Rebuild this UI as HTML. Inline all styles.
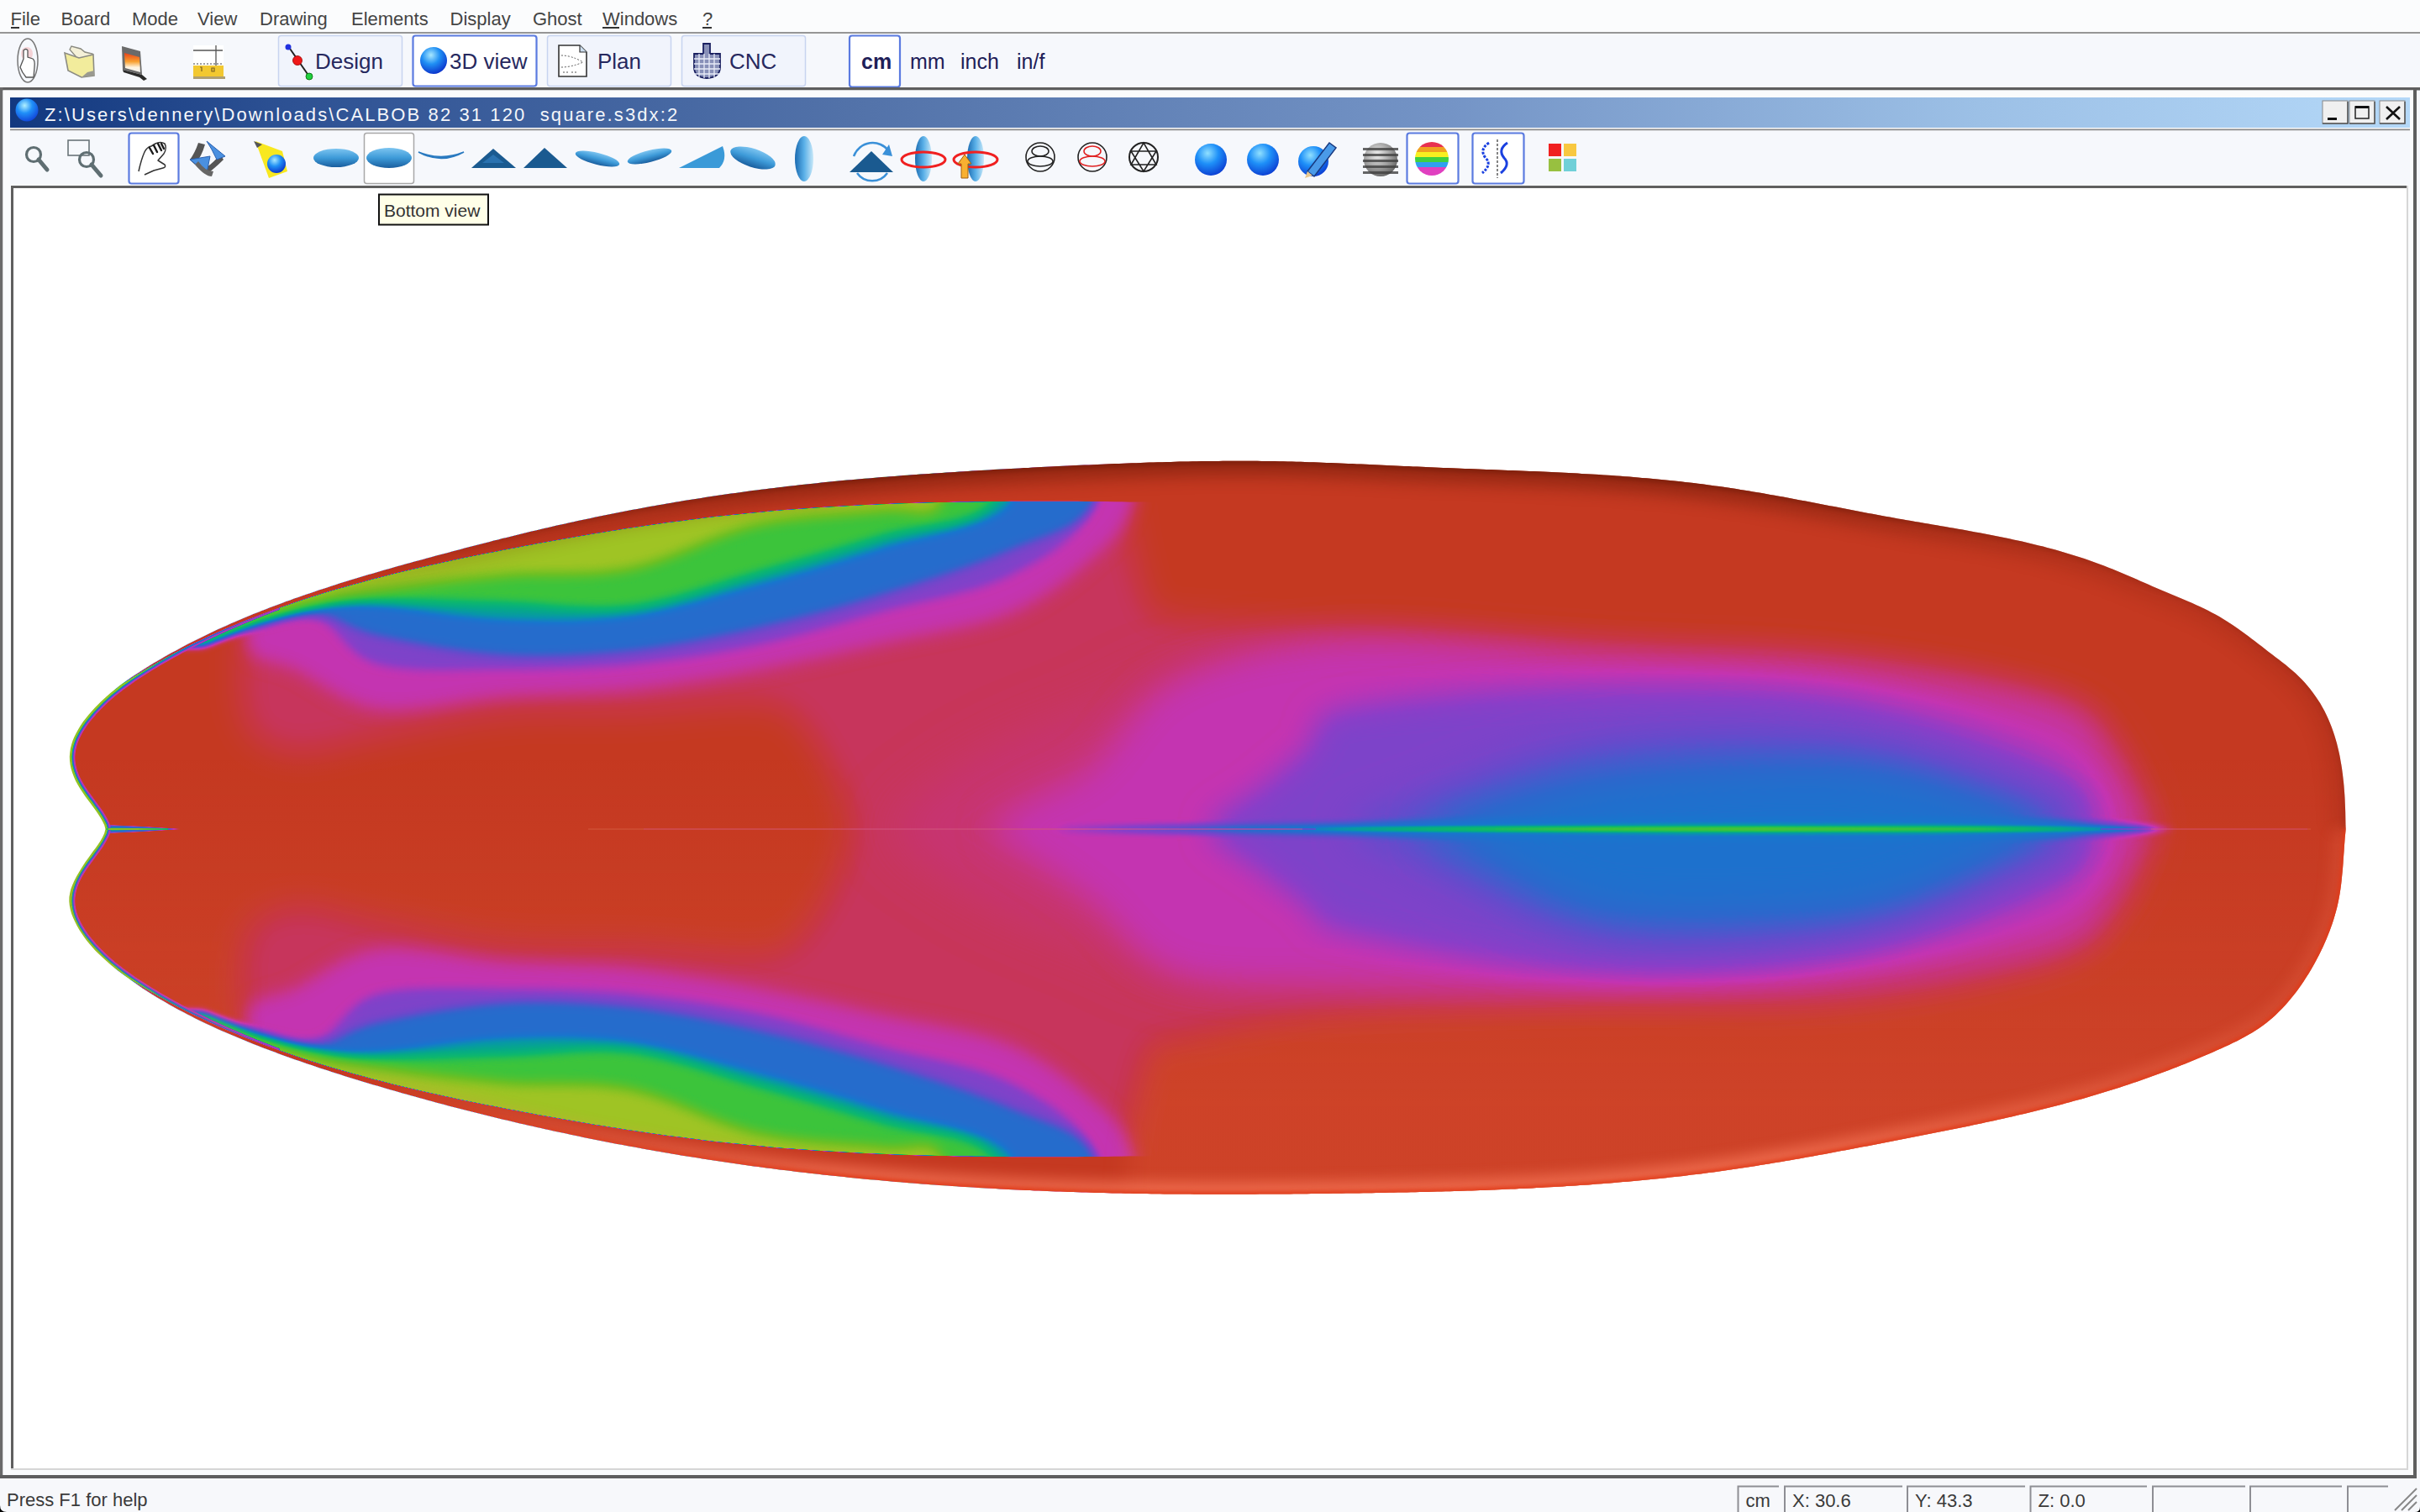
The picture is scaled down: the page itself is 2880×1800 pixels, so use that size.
<!DOCTYPE html><html><head><meta charset="utf-8"><title>Shape3d</title><style>
html,body{margin:0;padding:0;}body{width:2880px;height:1800px;overflow:hidden;position:relative;background:#F7F8FB;font-family:"Liberation Sans", sans-serif;}
.abs{position:absolute;}</style></head><body>
<svg class="abs" style="left:0;top:0" width="2880" height="1800" viewBox="0 0 2880 1800" font-family='"Liberation Sans", sans-serif'>
<rect x="0" y="0" width="2880" height="38" fill="#FBFCFD"/>
<rect x="0" y="38" width="2880" height="2" fill="#969696"/>
<rect x="0" y="40" width="2880" height="65" fill="#F6F8FC"/>
<text x="12.5" y="30" font-size="22" fill="#444" >File</text>
<text x="72.5" y="30" font-size="22" fill="#444" >Board</text>
<text x="157" y="30" font-size="22" fill="#444" >Mode</text>
<text x="235" y="30" font-size="22" fill="#444" >View</text>
<text x="309" y="30" font-size="22" fill="#444" >Drawing</text>
<text x="418" y="30" font-size="22" fill="#444" >Elements</text>
<text x="535.5" y="30" font-size="22" fill="#444" >Display</text>
<text x="634" y="30" font-size="22" fill="#444" >Ghost</text>
<text x="717" y="30" font-size="22" fill="#444" >Windows</text>
<text x="836" y="30" font-size="22" fill="#444" >?</text>
<rect x="13" y="32" width="10" height="2" fill="#333"/>
<rect x="717" y="32" width="20" height="2" fill="#333"/>
<rect x="836" y="32" width="11" height="2" fill="#333"/>
<ellipse cx="33" cy="72" rx="12" ry="26" fill="none" stroke="#777" stroke-width="1.5"/>
<ellipse cx="32" cy="64" rx="7" ry="8" fill="#F4C8CC" opacity="0.8"/>
<path d="M28,70 L28,60 Q31,57 33,60 L33,68 L39,70 Q42,72 41,80 L40,92 L31,92 Q26,86 24,80 Z" fill="#fff" stroke="#555" stroke-width="1.3"/>
<path d="M83,59 L85,55 L96,58 L101,62 L110,64 L111,78 L96,74 Z" fill="#F4F0D8" stroke="#8A8A80" stroke-width="1.4"/>
<path d="M77,63 L94,69 L111,65 L112,90 L97,92 L81,84 Z" fill="#F2EC9C" stroke="#8C8C84" stroke-width="1.6"/>
<path d="M97,92 L112,90 L112,84 L104,86 Z" fill="#9A9A90"/>
<path d="M145,55 L167,61 L169,89 L146,83 Z" fill="#6A6A6A"/>
<linearGradient id="fire" x1="0" y1="0" x2="0" y2="1"><stop offset="0" stop-color="#E84018"/><stop offset="0.45" stop-color="#F8A030"/><stop offset="0.75" stop-color="#FFF4E0"/><stop offset="1" stop-color="#F0F0F0"/></linearGradient>
<path d="M148,63 L166,68 L167,86 L149,81 Z" fill="url(#fire)"/>
<path d="M146,83 L169,89 L175,94 L171,96 L166,92 L147,86 Z" fill="#2A2A2A"/>
<rect x="230" y="54" width="36" height="24" fill="#fff"/>
<path d="M230,60 L265,60 M257,54 L257,78" stroke="#555" stroke-width="1.3"/>
<path d="M230,76 L266,76" stroke="#444" stroke-width="1.2" stroke-dasharray="2,2"/>
<rect x="230" y="78" width="36" height="14" fill="#F2C830"/>
<rect x="230" y="91" width="38" height="3" fill="#B0A070"/>
<path d="M238,80 L240,80 L240,85 M252,81 L255,81 L255,85 L252,85 Z" stroke="#7A6020" stroke-width="1.2" fill="none"/>
<rect x="331.5" y="42.5" width="147" height="60" rx="3" fill="#F1F4FC" stroke="#C8D4F0" stroke-width="1.5"/>
<rect x="491.5" y="42.5" width="147" height="60" rx="3" fill="#fff" stroke="#5B7BE0" stroke-width="2.2"/>
<rect x="651.5" y="42.5" width="147" height="60" rx="3" fill="#F1F4FC" stroke="#C8D4F0" stroke-width="1.5"/>
<rect x="811.5" y="42.5" width="147" height="60" rx="3" fill="#F1F4FC" stroke="#C8D4F0" stroke-width="1.5"/>
<path d="M343,55 L368,91" stroke="#222" stroke-width="2"/>
<circle cx="343" cy="56" r="3.5" fill="#2030E0"/>
<circle cx="354" cy="72" r="5.5" fill="#F01818" stroke="#900" stroke-width="0.8"/>
<circle cx="368" cy="91" r="4" fill="#20D040" stroke="#060" stroke-width="0.8"/>
<text x="375" y="82" font-size="26" fill="#26285E" >Design</text>
<radialGradient id="sph3d" cx="0.4" cy="0.3" r="0.75"><stop offset="0" stop-color="#A8E8FF"/><stop offset="0.45" stop-color="#2090F4"/><stop offset="1" stop-color="#0A2CC8"/></radialGradient><circle cx="516" cy="72" r="16" fill="url(#sph3d)"/>
<text x="535" y="82" font-size="26" fill="#26285E" >3D view</text>
<path d="M665,54 L690,54 L698,62 L698,91 L665,91 Z" fill="#fff" stroke="#333" stroke-width="1.6"/>
<path d="M690,54 L690,62 L698,62" fill="#CDE" stroke="#333" stroke-width="1.2"/>
<path d="M668,66 Q680,66 694,74 M668,80 Q680,80 694,74 M670,86 L676,86 M680,86 L686,86" stroke="#555" stroke-width="1" stroke-dasharray="2,2" fill="none"/>
<text x="711" y="82" font-size="26" fill="#26285E" >Plan</text>
<path d="M837,52 L845,52 L845,64 L857,64 L857,80 Q857,92 841,93 Q826,92 826,80 L826,64 L837,64 Z" fill="#8890B8" stroke="#1A2060" stroke-width="1.8"/>
<path d="M826,70 L857,70 M826,76 L857,76 M826,82 L857,82 M826,88 L857,88 M832,64 L832,92 M838,64 L838,93 M844,64 L844,93 M850,64 L850,92" stroke="#E8ECF8" stroke-width="1.3"/>
<text x="868" y="82" font-size="26" fill="#26285E" >CNC</text>
<rect x="1011" y="42.5" width="60" height="61" rx="3" fill="#fff" stroke="#5B7BE0" stroke-width="2.2"/>
<text x="1025" y="82" font-size="25" fill="#1E2058" font-weight="bold">cm</text>
<text x="1083" y="82" font-size="25" fill="#1E2058" >mm</text>
<text x="1143" y="82" font-size="25" fill="#1E2058" >inch</text>
<text x="1210" y="82" font-size="25" fill="#1E2058" >in/f</text>
<rect x="0" y="104" width="2880" height="3.5" fill="#5E5E5E"/>
<rect x="0" y="104" width="3.5" height="1656" fill="#6A6A6A"/>
<rect x="3.5" y="107.5" width="2869" height="1649" fill="#FAFBFC"/>
<rect x="2872" y="104" width="4" height="1656" fill="#5E5E5E"/>
<rect x="0" y="1756" width="2876" height="4" fill="#5E5E5E"/>
<linearGradient id="tbg" x1="0" y1="0" x2="1" y2="0"><stop offset="0" stop-color="#12387F"/><stop offset="0.12" stop-color="#2E5294"/><stop offset="0.35" stop-color="#5272A9"/><stop offset="0.6" stop-color="#7494C6"/><stop offset="0.82" stop-color="#9CC0E6"/><stop offset="1" stop-color="#B4D8F8"/></linearGradient>
<rect x="12" y="116" width="2856" height="36" fill="url(#tbg)"/>
<radialGradient id="sphT" cx="0.4" cy="0.3" r="0.75"><stop offset="0" stop-color="#B0F0FF"/><stop offset="0.45" stop-color="#2090F8"/><stop offset="1" stop-color="#1040D8"/></radialGradient><circle cx="32" cy="131" r="13.5" fill="url(#sphT)"/>
<text x="53" y="144" font-size="22" fill="#F4F6FA" letter-spacing="2.1" xml:space="preserve">Z:\Users\dennery\Downloads\CALBOB 82 31 120  square.s3dx:2</text>
<rect x="2764" y="120" width="30" height="27" fill="#F0F0F0" stroke="#888" stroke-width="1"/>
<path d="M2794,121 L2794,147 L2764,147" stroke="#555" stroke-width="1.5" fill="none"/>
<rect x="2796" y="120" width="30" height="27" fill="#F0F0F0" stroke="#888" stroke-width="1"/>
<path d="M2826,121 L2826,147 L2796,147" stroke="#555" stroke-width="1.5" fill="none"/>
<rect x="2832" y="120" width="30" height="27" fill="#F0F0F0" stroke="#888" stroke-width="1"/>
<path d="M2862,121 L2862,147 L2832,147" stroke="#555" stroke-width="1.5" fill="none"/>
<rect x="2770" y="140" width="11" height="3" fill="#111"/>
<rect x="2803" y="127" width="16" height="14" fill="none" stroke="#222" stroke-width="1.5"/><rect x="2803" y="126" width="16" height="3" fill="#111"/>
<path d="M2840,127 L2856,142 M2856,127 L2840,142" stroke="#111" stroke-width="2.6"/>
<rect x="12" y="153.5" width="2856" height="2" fill="#8A8A8A"/>
<rect x="12" y="155.5" width="2856" height="65" fill="#F6F8FC"/>
<circle cx="40" cy="184" r="8.5" fill="none" stroke="#5F6E72" stroke-width="3.2"/>
<path d="M46,190 L56,202" stroke="#5F6E72" stroke-width="5" stroke-linecap="round"/>
<rect x="81" y="167" width="25" height="18" fill="none" stroke="#6A7478" stroke-width="1.6"/>
<circle cx="103" cy="190" r="8.5" fill="none" stroke="#5F6E72" stroke-width="3.2"/>
<path d="M109,196 L120,209" stroke="#5F6E72" stroke-width="5" stroke-linecap="round"/>
<rect x="153.5" y="158.5" width="59" height="60" rx="3" fill="#fff" stroke="#5B7BE0" stroke-width="2.2"/>
<path d="M165,204 Q168,190 172,181 Q175,175 180,174 L185,171 Q191,168 196,171 Q199,176 195,183 L188,191 L196,196 Q198,199 194,200 L183,203 L172,208" fill="none" stroke="#333" stroke-width="1.5" stroke-linejoin="round"/>
<path d="M178,176 L182,183 M183,173 L187,181 M188,171 L192,179 M192,171 L195,177" stroke="#1a1a1a" stroke-width="2.4" stroke-linecap="round"/>
<path d="M236,170 Q232,182 226,190 L232,196 Q240,186 244,172 Z" fill="#555"/>
<path d="M248,206 Q258,198 266,190 L262,184 Q254,194 244,200 Z" fill="#555"/>
<path d="M226,190 L250,186 L246,206 Z" fill="#4A90E0" stroke="#2A60B0" stroke-width="1"/>
<path d="M246,168 L268,186 L258,190 L252,178 Z" fill="#4A90E0" stroke="#2A60B0" stroke-width="1"/>
<path d="M232,196 Q244,210 252,210 L254,204 Q244,204 236,192 Z" fill="#666"/>
<path d="M304,168 L336,180 L342,204 L320,212 Z" fill="#F8E820"/>
<path d="M302,168 L312,172 L306,176 Z" fill="#555"/>
<radialGradient id="sphl" cx="0.4" cy="0.3" r="0.75"><stop offset="0" stop-color="#A8E8FF"/><stop offset="0.45" stop-color="#2090F4"/><stop offset="1" stop-color="#0A2CC8"/></radialGradient><circle cx="329" cy="195" r="11" fill="url(#sphl)"/>
<linearGradient id="l1" x1="0" y1="0" x2="0" y2="1"><stop offset="0" stop-color="#7CC4F0"/><stop offset="0.5" stop-color="#3D9AD8"/><stop offset="1" stop-color="#1A5E9E"/></linearGradient><ellipse cx="400" cy="188" rx="27" ry="11" fill="url(#l1)" transform="rotate(0 400 188)"/>
<rect x="433.5" y="158.5" width="59" height="60" rx="3" fill="#fff" stroke="#A8A8A8" stroke-width="1.5"/>
<linearGradient id="l2" x1="0" y1="0" x2="0" y2="1"><stop offset="0" stop-color="#7CC4F0"/><stop offset="0.5" stop-color="#3D9AD8"/><stop offset="1" stop-color="#1A5E9E"/></linearGradient><ellipse cx="463" cy="188" rx="27" ry="12" fill="url(#l2)" transform="rotate(0 463 188)"/>
<path d="M498,181 Q525,196 552,181 Q525,192 498,181 Z" fill="#2A7AC0" stroke="#2A7AC0" stroke-width="1.5"/>
<path d="M561,200 L587,177 L614,200 Z" fill="#1A5A90"/>
<path d="M574,194 L587,184 L600,194 Z" fill="#3A8AD0" opacity="0.5"/>
<path d="M623,200 L648,176 L675,200 Z" fill="#1A5A90"/>
<linearGradient id="l3" x1="0" y1="0" x2="0" y2="1"><stop offset="0" stop-color="#7CC4F0"/><stop offset="0.5" stop-color="#3D9AD8"/><stop offset="1" stop-color="#1A5E9E"/></linearGradient><ellipse cx="711" cy="189" rx="27" ry="7" fill="url(#l3)" transform="rotate(14 711 189)"/>
<linearGradient id="l4" x1="0" y1="0" x2="0" y2="1"><stop offset="0" stop-color="#7CC4F0"/><stop offset="0.5" stop-color="#3D9AD8"/><stop offset="1" stop-color="#1A5E9E"/></linearGradient><ellipse cx="773" cy="186" rx="27" ry="7" fill="url(#l4)" transform="rotate(-14 773 186)"/>
<path d="M808,200 L860,174 Q866,190 856,200 Z" fill="#3A9AD8"/>
<linearGradient id="l5" x1="0" y1="0" x2="0" y2="1"><stop offset="0" stop-color="#7CC4F0"/><stop offset="0.5" stop-color="#3D9AD8"/><stop offset="1" stop-color="#1A5E9E"/></linearGradient><ellipse cx="896" cy="188" rx="28" ry="11" fill="url(#l5)" transform="rotate(18 896 188)"/>
<linearGradient id="vl" x1="0" y1="0" x2="1" y2="0"><stop offset="0" stop-color="#1A6AB0"/><stop offset="0.5" stop-color="#5AB0E8"/><stop offset="1" stop-color="#C8E8F8"/></linearGradient>
<ellipse cx="957" cy="189" rx="11" ry="27" fill="url(#vl)"/>
<path d="M1011,205 L1037,180 L1063,205 Z" fill="#1A5A90"/>
<path d="M1016,186 A24,24 0 0 1 1058,180" fill="none" stroke="#3A90D8" stroke-width="2.5"/>
<path d="M1020,206 A22,22 0 0 0 1056,206" fill="none" stroke="#3A90D8" stroke-width="2.5"/>
<path d="M1058,172 L1062,186 L1050,184 Z" fill="#3A90D8"/>
<ellipse cx="1099" cy="189" rx="10" ry="27" fill="url(#vl)"/>
<ellipse cx="1099" cy="190" rx="26" ry="9" fill="none" stroke="#F02020" stroke-width="3"/>
<ellipse cx="1161" cy="189" rx="10" ry="27" fill="url(#vl)"/>
<ellipse cx="1161" cy="190" rx="26" ry="9" fill="none" stroke="#F02020" stroke-width="3"/>
<path d="M1140,195 L1148,184 L1156,195 L1152,195 L1152,212 L1144,212 L1144,195 Z" fill="#F8B030" stroke="#A06010" stroke-width="1"/>
<circle cx="1238" cy="187" r="17" fill="none" stroke="#222" stroke-width="1.6"/>
<ellipse cx="1238" cy="180" rx="10" ry="6" fill="none" stroke="#222" stroke-width="1.5"/>
<ellipse cx="1238" cy="192" rx="15" ry="6" fill="none" stroke="#222" stroke-width="1.5"/>
<circle cx="1300" cy="187" r="17" fill="none" stroke="#222" stroke-width="1.6"/>
<ellipse cx="1300" cy="180" rx="10" ry="6" fill="none" stroke="#E02020" stroke-width="1.5"/>
<ellipse cx="1300" cy="192" rx="15" ry="6" fill="none" stroke="#E02020" stroke-width="1.5"/>
<circle cx="1361" cy="187" r="17" fill="none" stroke="#222" stroke-width="2"/>
<path d="M1346,180 L1376,180 L1361,204 Z M1346,196 L1376,196 L1361,170 Z" fill="none" stroke="#222" stroke-width="1.6"/>
<radialGradient id="sb1" cx="0.4" cy="0.3" r="0.75"><stop offset="0" stop-color="#90E0FF"/><stop offset="0.45" stop-color="#1E90F8"/><stop offset="1" stop-color="#0A38D0"/></radialGradient><circle cx="1441" cy="190" r="19" fill="url(#sb1)"/>
<radialGradient id="sb2" cx="0.4" cy="0.3" r="0.75"><stop offset="0" stop-color="#90E0FF"/><stop offset="0.45" stop-color="#1E90F8"/><stop offset="1" stop-color="#0A38D0"/></radialGradient><circle cx="1503" cy="190" r="19" fill="url(#sb2)"/>
<radialGradient id="sb3" cx="0.4" cy="0.3" r="0.75"><stop offset="0" stop-color="#90E0FF"/><stop offset="0.45" stop-color="#1E90F8"/><stop offset="1" stop-color="#0A38D0"/></radialGradient><circle cx="1563" cy="192" r="18" fill="url(#sb3)"/>
<path d="M1556,204 L1582,170 L1590,176 L1564,210 Z" fill="#4A9AE8" stroke="#1A3A80" stroke-width="1.5"/>
<path d="M1556,204 L1553,212 L1562,209 Z" fill="#E8C890"/>
<radialGradient id="sg" cx="0.4" cy="0.35" r="0.7"><stop offset="0" stop-color="#F0F0F0"/><stop offset="1" stop-color="#606060"/></radialGradient>
<circle cx="1643" cy="190" r="20" fill="url(#sg)"/>
<rect x="1622" y="176" width="42" height="3" fill="#404040" opacity="0.8"/>
<rect x="1622" y="183" width="42" height="3" fill="#404040" opacity="0.8"/>
<rect x="1622" y="190" width="42" height="3" fill="#404040" opacity="0.8"/>
<rect x="1622" y="197" width="42" height="3" fill="#404040" opacity="0.8"/>
<rect x="1622" y="204" width="42" height="3" fill="#404040" opacity="0.8"/>
<rect x="1674.5" y="158.5" width="61" height="60" rx="3" fill="#fff" stroke="#5B7BE0" stroke-width="2.2"/>
<clipPath id="rbc"><circle cx="1704" cy="189" r="20"/></clipPath>
<g clip-path="url(#rbc)"><rect x="1684" y="169" width="40" height="6" fill="#E83050"/><rect x="1684" y="175" width="40" height="6" fill="#F0A020"/><rect x="1684" y="181" width="40" height="6" fill="#F8F020"/><rect x="1684" y="187" width="40" height="6" fill="#40D040"/><rect x="1684" y="193" width="40" height="6" fill="#30A0F0"/><rect x="1684" y="199" width="40" height="11" fill="#E040C0"/></g>
<rect x="1752.5" y="158.5" width="61" height="60" rx="3" fill="#fff" stroke="#5B7BE0" stroke-width="2.2"/>
<path d="M1772,170 Q1760,178 1768,188 Q1776,196 1764,206" fill="none" stroke="#1A40E0" stroke-width="3" stroke-dasharray="3,1.5"/>
<path d="M1794,170 Q1782,178 1790,188 Q1798,196 1786,206" fill="none" stroke="#1A40E0" stroke-width="3"/>
<path d="M1782,166 L1782,212" stroke="#333" stroke-width="1.2" stroke-dasharray="3,2"/>
<rect x="1843" y="171" width="15" height="15" fill="#F02020"/><rect x="1861" y="171" width="15" height="15" fill="#F8C840"/>
<rect x="1843" y="189" width="15" height="15" fill="#98C040"/><rect x="1861" y="189" width="15" height="15" fill="#70D0D8"/>
<rect x="13" y="221" width="2853" height="1529" fill="#D6D6D6"/>
<rect x="13" y="221" width="2851" height="3" fill="#5F5F5F"/>
<rect x="13" y="221" width="3" height="1527" fill="#5F5F5F"/>
<rect x="16" y="224" width="2848" height="1524" fill="#FFFFFF"/>
<text x="8" y="1793" font-size="22" fill="#3a3a3a" >Press F1 for help</text>
<path d="M2068.5,1800 L2068.5,1769.5 L2117,1769.5" fill="none" stroke="#8E8E94" stroke-width="2"/>
<text x="2077.5" y="1794" font-size="22" fill="#3a3a3a" >cm</text>
<path d="M2124,1800 L2124,1769.5 L2264,1769.5" fill="none" stroke="#8E8E94" stroke-width="2"/>
<text x="2133" y="1794" font-size="22" fill="#3a3a3a" >X: 30.6</text>
<path d="M2270,1800 L2270,1769.5 L2410,1769.5" fill="none" stroke="#8E8E94" stroke-width="2"/>
<text x="2279" y="1794" font-size="22" fill="#3a3a3a" >Y: 43.3</text>
<path d="M2416.5,1800 L2416.5,1769.5 L2555,1769.5" fill="none" stroke="#8E8E94" stroke-width="2"/>
<text x="2425.5" y="1794" font-size="22" fill="#3a3a3a" >Z: 0.0</text>
<path d="M2562,1800 L2562,1769.5 L2672,1769.5" fill="none" stroke="#8E8E94" stroke-width="2"/>
<path d="M2678,1800 L2678,1769.5 L2787,1769.5" fill="none" stroke="#8E8E94" stroke-width="2"/>
<path d="M2794,1800 L2794,1769.5 L2842,1769.5" fill="none" stroke="#8E8E94" stroke-width="2"/>
<path d="M2850,1798 L2876,1772 M2858,1798 L2876,1780 M2866,1798 L2876,1788" stroke="#888" stroke-width="2"/>
<path d="M0,1792 Q0,1800 8,1800 L0,1800 Z" fill="#000"/><path d="M2880,1794 Q2880,1800 2874,1800 L2880,1800 Z" fill="#000"/>
</svg>
<svg class="abs" style="left:0;top:0" width="2880" height="1800" viewBox="0 0 2880 1800">
<defs>
<clipPath id="bclip"><path d="M125.5,987.0 L124.2,982.2 L122.0,977.8 L119.6,973.5 L116.9,969.2 L114.0,965.0 L110.9,960.8 L107.8,956.5 L104.6,952.3 L101.4,948.0 L98.4,943.6 L95.4,939.1 L92.7,934.5 L90.2,929.9 L88.0,925.1 L86.2,920.3 L84.7,915.4 L83.6,910.5 L83.0,905.6 L82.8,900.7 L83.2,895.9 L83.9,891.1 L85.1,886.3 L86.6,881.6 L88.5,877.0 L90.8,872.4 L93.3,867.9 L96.0,863.5 L99.0,859.1 L102.2,854.9 L105.6,850.8 L109.1,846.7 L112.7,842.8 L116.4,839.0 L120.1,835.3 L123.9,831.7 L127.8,828.2 L131.7,824.8 L135.8,821.5 L139.8,818.3 L143.9,815.1 L148.1,812.1 L152.3,809.1 L156.5,806.1 L160.8,803.3 L165.1,800.5 L169.4,797.7 L173.7,795.0 L178.1,792.3 L182.5,789.6 L186.9,787.0 L191.3,784.4 L195.8,781.8 L200.2,779.3 L204.7,776.8 L209.2,774.4 L213.7,771.9 L218.2,769.5 L222.8,767.1 L227.3,764.8 L231.9,762.5 L236.5,760.2 L241.1,757.9 L245.7,755.7 L250.3,753.5 L254.9,751.3 L259.6,749.1 L264.2,747.0 L268.9,744.9 L273.6,742.8 L278.3,740.8 L283.0,738.7 L287.7,736.7 L292.4,734.7 L297.2,732.8 L301.9,730.8 L306.7,728.9 L311.5,727.0 L316.3,725.2 L321.1,723.3 L325.9,721.5 L330.7,719.7 L335.5,717.9 L340.3,716.1 L345.2,714.4 L350.0,712.6 L354.9,710.9 L359.7,709.2 L364.6,707.5 L369.5,705.9 L374.4,704.2 L379.3,702.6 L384.2,701.0 L389.1,699.4 L394.0,697.8 L398.9,696.2 L403.8,694.6 L408.8,693.1 L413.7,691.6 L418.6,690.1 L423.6,688.6 L428.5,687.1 L433.5,685.6 L438.4,684.1 L443.4,682.7 L448.3,681.2 L453.3,679.8 L458.3,678.3 L463.2,676.9 L468.2,675.5 L473.2,674.1 L478.1,672.7 L483.1,671.3 L488.1,670.0 L493.1,668.6 L498.1,667.2 L503.0,665.9 L508.0,664.5 L513.0,663.2 L518.0,661.8 L522.9,660.5 L527.9,659.2 L532.9,657.9 L537.9,656.5 L542.8,655.2 L547.8,653.9 L552.8,652.6 L557.8,651.3 L562.8,650.0 L567.7,648.7 L572.7,647.4 L577.7,646.2 L582.7,644.9 L587.6,643.6 L592.6,642.4 L597.6,641.1 L602.6,639.9 L607.6,638.7 L612.5,637.4 L617.5,636.2 L622.5,635.0 L627.5,633.8 L632.5,632.6 L637.5,631.4 L642.5,630.2 L647.5,629.1 L652.5,627.9 L657.5,626.8 L662.5,625.6 L667.5,624.5 L672.5,623.4 L677.5,622.3 L682.5,621.2 L687.6,620.1 L692.6,619.0 L697.6,617.9 L702.6,616.9 L707.7,615.8 L712.7,614.8 L717.7,613.7 L722.8,612.7 L727.8,611.7 L732.9,610.7 L737.9,609.7 L743.0,608.7 L748.0,607.8 L753.1,606.8 L758.2,605.9 L763.2,604.9 L768.3,604.0 L773.4,603.1 L778.4,602.2 L783.5,601.3 L788.6,600.4 L793.6,599.5 L798.7,598.7 L803.8,597.8 L808.9,597.0 L814.0,596.1 L819.1,595.3 L824.2,594.5 L829.2,593.7 L834.3,592.9 L839.4,592.1 L844.5,591.3 L849.6,590.6 L854.7,589.8 L859.8,589.1 L864.9,588.3 L870.0,587.6 L875.1,586.9 L880.3,586.2 L885.4,585.5 L890.5,584.8 L895.6,584.1 L900.7,583.5 L905.8,582.8 L910.9,582.2 L916.0,581.5 L921.1,580.9 L926.3,580.3 L931.4,579.7 L936.5,579.1 L941.6,578.5 L946.7,577.9 L951.8,577.3 L957.0,576.8 L962.1,576.2 L967.2,575.7 L972.3,575.2 L977.4,574.6 L982.6,574.1 L987.7,573.6 L992.8,573.1 L997.9,572.6 L1003.0,572.1 L1008.2,571.6 L1013.3,571.2 L1018.4,570.7 L1023.5,570.3 L1028.7,569.8 L1033.8,569.4 L1038.9,568.9 L1044.0,568.5 L1049.2,568.1 L1054.3,567.7 L1059.4,567.3 L1064.5,566.9 L1069.7,566.5 L1074.8,566.1 L1079.9,565.7 L1085.1,565.3 L1090.2,565.0 L1095.3,564.6 L1100.5,564.3 L1105.6,563.9 L1110.7,563.6 L1115.9,563.2 L1121.0,562.9 L1126.1,562.5 L1131.3,562.2 L1136.4,561.9 L1141.5,561.6 L1146.7,561.2 L1151.8,560.9 L1156.9,560.6 L1162.1,560.3 L1167.2,560.0 L1172.3,559.7 L1177.5,559.4 L1182.6,559.1 L1187.7,558.8 L1192.9,558.5 L1198.0,558.3 L1203.2,558.0 L1208.3,557.7 L1213.4,557.4 L1218.6,557.1 L1223.7,556.9 L1228.9,556.6 L1234.0,556.3 L1239.1,556.1 L1244.3,555.8 L1249.4,555.6 L1254.6,555.3 L1259.7,555.0 L1264.8,554.8 L1270.0,554.6 L1275.1,554.3 L1280.3,554.1 L1285.4,553.8 L1290.6,553.6 L1295.7,553.4 L1300.8,553.2 L1306.0,552.9 L1311.1,552.7 L1316.3,552.5 L1321.4,552.3 L1326.6,552.1 L1331.7,551.9 L1336.9,551.7 L1342.0,551.5 L1347.1,551.3 L1352.3,551.2 L1357.4,551.0 L1362.6,550.8 L1367.7,550.6 L1372.9,550.5 L1378.0,550.3 L1383.2,550.2 L1388.3,550.0 L1393.5,549.9 L1398.6,549.8 L1403.8,549.6 L1408.9,549.5 L1414.1,549.4 L1419.2,549.3 L1424.4,549.2 L1429.5,549.1 L1434.7,549.0 L1439.8,549.0 L1445.0,548.9 L1450.1,548.9 L1455.3,548.8 L1460.4,548.8 L1465.6,548.8 L1470.7,548.7 L1475.9,548.7 L1481.0,548.7 L1486.2,548.8 L1491.3,548.8 L1496.4,548.8 L1501.6,548.9 L1506.7,548.9 L1511.9,549.0 L1517.0,549.1 L1522.2,549.2 L1527.3,549.3 L1532.4,549.4 L1537.6,549.6 L1542.7,549.7 L1547.9,549.8 L1553.0,550.0 L1558.1,550.2 L1563.3,550.3 L1568.4,550.5 L1573.5,550.7 L1578.7,550.9 L1583.8,551.1 L1589.0,551.3 L1594.1,551.5 L1599.2,551.7 L1604.4,551.9 L1609.5,552.1 L1614.6,552.4 L1619.8,552.6 L1624.9,552.8 L1630.0,553.0 L1635.2,553.3 L1640.3,553.5 L1645.5,553.7 L1650.6,554.0 L1655.7,554.2 L1660.9,554.4 L1666.0,554.7 L1671.2,554.9 L1676.3,555.1 L1681.5,555.4 L1686.6,555.6 L1691.7,555.8 L1696.9,556.0 L1702.0,556.3 L1707.2,556.5 L1712.3,556.7 L1717.5,556.9 L1722.6,557.1 L1727.8,557.3 L1732.9,557.5 L1738.1,557.7 L1743.2,557.9 L1748.4,558.1 L1753.5,558.3 L1758.7,558.5 L1763.8,558.7 L1769.0,558.9 L1774.1,559.1 L1779.3,559.3 L1784.5,559.5 L1789.6,559.7 L1794.8,559.9 L1799.9,560.1 L1805.1,560.3 L1810.2,560.5 L1815.4,560.7 L1820.5,560.9 L1825.7,561.1 L1830.8,561.3 L1836.0,561.6 L1841.1,561.8 L1846.3,562.0 L1851.4,562.3 L1856.6,562.5 L1861.7,562.8 L1866.9,563.0 L1872.0,563.3 L1877.2,563.6 L1882.3,563.9 L1887.5,564.2 L1892.6,564.5 L1897.7,564.8 L1902.9,565.1 L1908.0,565.4 L1913.2,565.8 L1918.3,566.1 L1923.4,566.5 L1928.6,566.8 L1933.7,567.2 L1938.8,567.6 L1944.0,568.0 L1949.1,568.4 L1954.2,568.9 L1959.3,569.3 L1964.5,569.7 L1969.6,570.2 L1974.7,570.7 L1979.8,571.2 L1984.9,571.7 L1990.0,572.2 L1995.1,572.8 L2000.2,573.3 L2005.4,573.9 L2010.5,574.5 L2015.6,575.1 L2020.7,575.7 L2025.7,576.3 L2030.8,577.0 L2035.9,577.7 L2041.0,578.4 L2046.1,579.1 L2051.2,579.8 L2056.3,580.6 L2061.3,581.3 L2066.4,582.1 L2071.5,582.9 L2076.6,583.7 L2081.6,584.5 L2086.7,585.4 L2091.8,586.2 L2096.8,587.1 L2101.9,588.0 L2106.9,588.9 L2112.0,589.8 L2117.1,590.7 L2122.1,591.6 L2127.2,592.5 L2132.2,593.5 L2137.3,594.4 L2142.3,595.4 L2147.4,596.3 L2152.5,597.3 L2157.5,598.3 L2162.6,599.2 L2167.6,600.2 L2172.7,601.2 L2177.7,602.2 L2182.8,603.1 L2187.9,604.1 L2192.9,605.1 L2198.0,606.1 L2203.1,607.0 L2208.1,608.0 L2213.2,609.0 L2218.3,609.9 L2223.3,610.9 L2228.4,611.8 L2233.5,612.8 L2238.6,613.7 L2243.7,614.7 L2248.8,615.6 L2253.9,616.5 L2258.9,617.4 L2264.0,618.3 L2269.1,619.2 L2274.2,620.1 L2279.3,620.9 L2284.5,621.8 L2289.6,622.7 L2294.7,623.6 L2299.8,624.4 L2304.9,625.3 L2310.0,626.2 L2315.1,627.1 L2320.2,627.9 L2325.3,628.8 L2330.4,629.7 L2335.5,630.6 L2340.6,631.5 L2345.7,632.4 L2350.8,633.4 L2355.8,634.3 L2360.9,635.3 L2366.0,636.2 L2371.1,637.2 L2376.1,638.2 L2381.2,639.2 L2386.2,640.3 L2391.3,641.3 L2396.3,642.4 L2401.4,643.5 L2406.4,644.6 L2411.4,645.8 L2416.4,647.0 L2421.4,648.2 L2426.4,649.4 L2431.4,650.6 L2436.3,651.9 L2441.3,653.3 L2446.2,654.6 L2451.2,656.0 L2456.1,657.4 L2461.0,658.9 L2465.9,660.4 L2470.8,661.9 L2475.7,663.5 L2480.5,665.1 L2485.4,666.8 L2490.2,668.5 L2495.0,670.2 L2499.8,672.0 L2504.6,673.8 L2509.4,675.7 L2514.2,677.6 L2518.9,679.6 L2523.7,681.5 L2528.4,683.5 L2533.1,685.6 L2537.9,687.6 L2542.6,689.6 L2547.3,691.7 L2552.1,693.8 L2556.8,695.8 L2561.5,697.9 L2566.3,699.9 L2571.0,701.9 L2575.8,703.9 L2580.6,705.9 L2585.3,707.9 L2590.1,709.9 L2594.9,711.9 L2599.6,713.9 L2604.3,716.0 L2609.1,718.0 L2613.8,720.2 L2618.4,722.3 L2623.1,724.5 L2627.7,726.8 L2632.2,729.2 L2636.7,731.6 L2641.2,734.1 L2645.6,736.7 L2650.0,739.4 L2654.3,742.2 L2658.5,745.1 L2662.8,748.0 L2667.0,751.0 L2671.1,754.0 L2675.3,757.1 L2679.4,760.2 L2683.5,763.3 L2687.6,766.4 L2691.7,769.6 L2695.7,772.8 L2699.8,775.9 L2703.9,779.0 L2708.0,782.2 L2712.1,785.3 L2716.2,788.5 L2720.2,791.6 L2724.2,794.9 L2728.1,798.2 L2731.9,801.6 L2735.7,805.2 L2739.3,808.8 L2742.8,812.6 L2746.2,816.5 L2749.5,820.5 L2752.7,824.7 L2755.7,828.9 L2758.6,833.2 L2761.4,837.6 L2763.9,842.1 L2766.4,846.6 L2768.7,851.2 L2770.8,855.8 L2772.8,860.5 L2774.7,865.3 L2776.4,870.1 L2778.1,875.0 L2779.6,879.9 L2781.0,884.8 L2782.2,889.8 L2783.4,894.8 L2784.5,899.8 L2785.4,904.9 L2786.3,909.9 L2787.1,915.0 L2787.8,920.2 L2788.4,925.3 L2789.0,930.5 L2789.5,935.6 L2789.9,940.8 L2790.3,946.0 L2790.6,951.1 L2790.8,956.3 L2791.0,961.4 L2791.2,966.6 L2791.3,971.7 L2791.4,976.8 L2791.5,981.9 L2791.7,987.0 L2791.2,992.1 L2790.7,997.1 L2790.3,1002.2 L2789.9,1007.4 L2789.6,1012.5 L2789.2,1017.7 L2788.8,1022.9 L2788.5,1028.1 L2788.1,1033.3 L2787.6,1038.5 L2787.1,1043.6 L2786.6,1048.8 L2786.0,1054.0 L2785.3,1059.1 L2784.5,1064.2 L2783.6,1069.3 L2782.6,1074.3 L2781.5,1079.3 L2780.2,1084.3 L2778.8,1089.2 L2777.4,1094.1 L2775.8,1099.0 L2774.1,1103.8 L2772.4,1108.6 L2770.5,1113.3 L2768.6,1118.1 L2766.5,1122.8 L2764.4,1127.4 L2762.2,1132.1 L2759.9,1136.7 L2757.5,1141.3 L2755.0,1145.9 L2752.5,1150.4 L2749.9,1154.9 L2747.2,1159.4 L2744.4,1163.8 L2741.6,1168.2 L2738.7,1172.5 L2735.7,1176.8 L2732.6,1180.9 L2729.4,1185.1 L2726.1,1189.1 L2722.8,1193.0 L2719.3,1196.9 L2715.8,1200.7 L2712.2,1204.3 L2708.5,1207.9 L2704.7,1211.4 L2700.8,1214.7 L2696.8,1217.9 L2692.8,1221.0 L2688.6,1224.0 L2684.3,1226.8 L2680.0,1229.5 L2675.5,1232.1 L2671.1,1234.6 L2666.5,1237.0 L2661.9,1239.4 L2657.3,1241.6 L2652.6,1243.9 L2647.9,1246.0 L2643.2,1248.2 L2638.4,1250.3 L2633.7,1252.4 L2629.0,1254.4 L2624.2,1256.5 L2619.4,1258.5 L2614.7,1260.5 L2609.9,1262.5 L2605.1,1264.4 L2600.3,1266.4 L2595.6,1268.3 L2590.8,1270.2 L2586.0,1272.1 L2581.1,1273.9 L2576.3,1275.7 L2571.5,1277.5 L2566.7,1279.3 L2561.8,1281.1 L2557.0,1282.8 L2552.1,1284.5 L2547.3,1286.2 L2542.4,1287.9 L2537.5,1289.6 L2532.6,1291.2 L2527.8,1292.8 L2522.9,1294.4 L2518.0,1296.0 L2513.1,1297.5 L2508.1,1299.1 L2503.2,1300.6 L2498.3,1302.1 L2493.4,1303.6 L2488.4,1305.0 L2483.5,1306.4 L2478.6,1307.9 L2473.6,1309.2 L2468.6,1310.6 L2463.7,1312.0 L2458.7,1313.3 L2453.7,1314.7 L2448.8,1316.0 L2443.8,1317.3 L2438.8,1318.5 L2433.8,1319.8 L2428.8,1321.0 L2423.8,1322.3 L2418.8,1323.5 L2413.8,1324.7 L2408.8,1325.9 L2403.8,1327.1 L2398.7,1328.2 L2393.7,1329.4 L2388.7,1330.5 L2383.7,1331.7 L2378.6,1332.8 L2373.6,1333.9 L2368.6,1335.0 L2363.5,1336.1 L2358.5,1337.2 L2353.4,1338.3 L2348.4,1339.3 L2343.3,1340.4 L2338.3,1341.4 L2333.2,1342.5 L2328.2,1343.5 L2323.1,1344.5 L2318.0,1345.6 L2313.0,1346.6 L2307.9,1347.6 L2302.8,1348.6 L2297.8,1349.6 L2292.7,1350.6 L2287.6,1351.6 L2282.6,1352.6 L2277.5,1353.6 L2272.4,1354.6 L2267.4,1355.5 L2262.3,1356.5 L2257.2,1357.5 L2252.2,1358.5 L2247.1,1359.5 L2242.0,1360.4 L2237.0,1361.4 L2231.9,1362.4 L2226.8,1363.4 L2221.8,1364.4 L2216.7,1365.3 L2211.6,1366.3 L2206.6,1367.3 L2201.5,1368.2 L2196.4,1369.2 L2191.4,1370.1 L2186.3,1371.1 L2181.2,1372.0 L2176.1,1373.0 L2171.1,1373.9 L2166.0,1374.8 L2160.9,1375.8 L2155.9,1376.7 L2150.8,1377.6 L2145.7,1378.5 L2140.6,1379.4 L2135.6,1380.3 L2130.5,1381.2 L2125.4,1382.0 L2120.3,1382.9 L2115.2,1383.8 L2110.2,1384.6 L2105.1,1385.4 L2100.0,1386.3 L2094.9,1387.1 L2089.8,1387.9 L2084.7,1388.7 L2079.7,1389.5 L2074.6,1390.3 L2069.5,1391.0 L2064.4,1391.8 L2059.3,1392.5 L2054.2,1393.3 L2049.1,1394.0 L2044.0,1394.7 L2038.9,1395.4 L2033.8,1396.1 L2028.7,1396.7 L2023.6,1397.4 L2018.5,1398.0 L2013.4,1398.6 L2008.3,1399.3 L2003.2,1399.9 L1998.0,1400.5 L1992.9,1401.0 L1987.8,1401.6 L1982.7,1402.2 L1977.6,1402.7 L1972.5,1403.2 L1967.3,1403.8 L1962.2,1404.3 L1957.1,1404.8 L1952.0,1405.3 L1946.8,1405.7 L1941.7,1406.2 L1936.6,1406.7 L1931.4,1407.1 L1926.3,1407.6 L1921.2,1408.0 L1916.0,1408.4 L1910.9,1408.8 L1905.8,1409.2 L1900.6,1409.6 L1895.5,1410.0 L1890.4,1410.4 L1885.2,1410.7 L1880.1,1411.1 L1874.9,1411.4 L1869.8,1411.7 L1864.7,1412.1 L1859.5,1412.4 L1854.4,1412.7 L1849.2,1413.0 L1844.1,1413.3 L1838.9,1413.6 L1833.8,1413.9 L1828.6,1414.1 L1823.5,1414.4 L1818.3,1414.7 L1813.2,1414.9 L1808.0,1415.1 L1802.9,1415.4 L1797.7,1415.6 L1792.6,1415.8 L1787.4,1416.1 L1782.3,1416.3 L1777.1,1416.5 L1771.9,1416.7 L1766.8,1416.9 L1761.6,1417.0 L1756.5,1417.2 L1751.3,1417.4 L1746.2,1417.6 L1741.0,1417.7 L1735.9,1417.9 L1730.7,1418.0 L1725.5,1418.2 L1720.4,1418.3 L1715.2,1418.5 L1710.1,1418.6 L1704.9,1418.7 L1699.7,1418.9 L1694.6,1419.0 L1689.4,1419.1 L1684.3,1419.2 L1679.1,1419.3 L1674.0,1419.4 L1668.8,1419.5 L1663.6,1419.6 L1658.5,1419.7 L1653.3,1419.8 L1648.2,1419.9 L1643.0,1420.0 L1637.8,1420.1 L1632.7,1420.2 L1627.5,1420.2 L1622.4,1420.3 L1617.2,1420.4 L1612.1,1420.5 L1606.9,1420.6 L1601.7,1420.6 L1596.6,1420.7 L1591.4,1420.8 L1586.3,1420.8 L1581.1,1420.9 L1576.0,1421.0 L1570.8,1421.0 L1565.7,1421.1 L1560.5,1421.1 L1555.4,1421.2 L1550.2,1421.2 L1545.1,1421.3 L1539.9,1421.3 L1534.8,1421.4 L1529.6,1421.4 L1524.5,1421.5 L1519.3,1421.5 L1514.2,1421.6 L1509.0,1421.6 L1503.9,1421.6 L1498.7,1421.6 L1493.6,1421.7 L1488.4,1421.7 L1483.3,1421.7 L1478.1,1421.7 L1473.0,1421.7 L1467.8,1421.8 L1462.7,1421.8 L1457.5,1421.8 L1452.4,1421.8 L1447.2,1421.8 L1442.1,1421.7 L1436.9,1421.7 L1431.8,1421.7 L1426.6,1421.7 L1421.5,1421.7 L1416.3,1421.6 L1411.2,1421.6 L1406.0,1421.6 L1400.9,1421.5 L1395.7,1421.5 L1390.6,1421.4 L1385.5,1421.4 L1380.3,1421.3 L1375.2,1421.3 L1370.0,1421.2 L1364.9,1421.1 L1359.7,1421.1 L1354.6,1421.0 L1349.4,1420.9 L1344.3,1420.8 L1339.1,1420.7 L1334.0,1420.6 L1328.8,1420.5 L1323.7,1420.4 L1318.5,1420.3 L1313.4,1420.1 L1308.2,1420.0 L1303.1,1419.9 L1297.9,1419.7 L1292.8,1419.6 L1287.6,1419.4 L1282.5,1419.3 L1277.3,1419.1 L1272.2,1418.9 L1267.0,1418.8 L1261.9,1418.6 L1256.7,1418.4 L1251.6,1418.2 L1246.4,1418.0 L1241.3,1417.8 L1236.2,1417.6 L1231.0,1417.4 L1225.9,1417.1 L1220.7,1416.9 L1215.6,1416.7 L1210.4,1416.4 L1205.3,1416.2 L1200.1,1415.9 L1195.0,1415.7 L1189.8,1415.4 L1184.7,1415.1 L1179.5,1414.8 L1174.4,1414.5 L1169.2,1414.2 L1164.1,1413.9 L1158.9,1413.6 L1153.8,1413.3 L1148.6,1413.0 L1143.5,1412.7 L1138.3,1412.3 L1133.2,1412.0 L1128.0,1411.6 L1122.9,1411.3 L1117.8,1410.9 L1112.6,1410.5 L1107.5,1410.2 L1102.3,1409.8 L1097.2,1409.4 L1092.0,1409.0 L1086.9,1408.6 L1081.8,1408.2 L1076.6,1407.8 L1071.5,1407.3 L1066.3,1406.9 L1061.2,1406.5 L1056.1,1406.0 L1050.9,1405.6 L1045.8,1405.1 L1040.7,1404.6 L1035.5,1404.2 L1030.4,1403.7 L1025.3,1403.2 L1020.1,1402.7 L1015.0,1402.2 L1009.9,1401.7 L1004.7,1401.1 L999.6,1400.6 L994.5,1400.1 L989.4,1399.5 L984.2,1399.0 L979.1,1398.4 L974.0,1397.8 L968.9,1397.3 L963.7,1396.7 L958.6,1396.1 L953.5,1395.5 L948.4,1394.9 L943.2,1394.3 L938.1,1393.6 L933.0,1393.0 L927.9,1392.4 L922.8,1391.7 L917.7,1391.1 L912.6,1390.4 L907.4,1389.7 L902.3,1389.1 L897.2,1388.4 L892.1,1387.7 L887.0,1387.0 L881.9,1386.2 L876.8,1385.5 L871.7,1384.8 L866.6,1384.1 L861.5,1383.3 L856.4,1382.6 L851.3,1381.8 L846.2,1381.0 L841.1,1380.2 L836.0,1379.4 L830.9,1378.6 L825.9,1377.8 L820.8,1377.0 L815.7,1376.2 L810.6,1375.4 L805.5,1374.5 L800.4,1373.7 L795.3,1372.8 L790.3,1372.0 L785.2,1371.1 L780.1,1370.2 L775.0,1369.3 L770.0,1368.4 L764.9,1367.5 L759.8,1366.6 L754.8,1365.6 L749.7,1364.7 L744.6,1363.8 L739.6,1362.8 L734.5,1361.9 L729.4,1360.9 L724.4,1359.9 L719.3,1358.9 L714.3,1357.9 L709.2,1356.9 L704.2,1355.9 L699.1,1354.9 L694.1,1353.9 L689.0,1352.8 L684.0,1351.8 L678.9,1350.7 L673.9,1349.6 L668.9,1348.6 L663.8,1347.5 L658.8,1346.4 L653.8,1345.3 L648.7,1344.2 L643.7,1343.1 L638.7,1342.0 L633.7,1340.8 L628.6,1339.7 L623.6,1338.5 L618.6,1337.4 L613.6,1336.2 L608.6,1335.0 L603.6,1333.8 L598.5,1332.7 L593.5,1331.5 L588.5,1330.2 L583.5,1329.0 L578.5,1327.8 L573.5,1326.6 L568.5,1325.3 L563.5,1324.1 L558.5,1322.8 L553.5,1321.5 L548.6,1320.2 L543.6,1319.0 L538.6,1317.7 L533.6,1316.4 L528.6,1315.0 L523.6,1313.7 L518.7,1312.4 L513.7,1311.0 L508.7,1309.7 L503.8,1308.3 L498.8,1307.0 L493.8,1305.6 L488.9,1304.2 L483.9,1302.8 L478.9,1301.4 L474.0,1300.0 L469.0,1298.6 L464.1,1297.2 L459.1,1295.7 L454.2,1294.3 L449.3,1292.8 L444.3,1291.4 L439.4,1289.9 L434.4,1288.4 L429.5,1286.9 L424.6,1285.4 L419.7,1283.9 L414.7,1282.4 L409.8,1280.9 L404.9,1279.3 L400.0,1277.7 L395.1,1276.2 L390.2,1274.6 L385.3,1273.0 L380.4,1271.4 L375.5,1269.8 L370.6,1268.1 L365.7,1266.5 L360.9,1264.8 L356.0,1263.1 L351.1,1261.4 L346.3,1259.7 L341.4,1257.9 L336.5,1256.2 L331.7,1254.4 L326.9,1252.6 L322.0,1250.8 L317.2,1249.0 L312.4,1247.2 L307.6,1245.3 L302.8,1243.4 L298.0,1241.5 L293.2,1239.6 L288.4,1237.6 L283.6,1235.6 L278.9,1233.6 L274.1,1231.6 L269.4,1229.6 L264.6,1227.5 L259.9,1225.4 L255.2,1223.3 L250.5,1221.1 L245.9,1218.9 L241.2,1216.7 L236.6,1214.4 L232.0,1212.2 L227.4,1209.8 L222.8,1207.5 L218.2,1205.1 L213.7,1202.7 L209.1,1200.2 L204.6,1197.7 L200.2,1195.2 L195.7,1192.6 L191.3,1190.0 L186.9,1187.4 L182.5,1184.7 L178.1,1182.0 L173.8,1179.2 L169.5,1176.4 L165.2,1173.5 L161.0,1170.6 L156.8,1167.6 L152.6,1164.6 L148.4,1161.6 L144.3,1158.5 L140.2,1155.4 L136.2,1152.2 L132.2,1148.9 L128.3,1145.6 L124.4,1142.1 L120.6,1138.6 L116.9,1135.1 L113.3,1131.4 L109.8,1127.6 L106.5,1123.7 L103.2,1119.7 L100.1,1115.5 L97.2,1111.3 L94.4,1106.9 L91.7,1102.3 L89.3,1097.6 L87.1,1092.8 L85.2,1088.0 L83.8,1083.0 L82.8,1078.0 L82.3,1073.1 L82.4,1068.1 L83.2,1063.2 L84.4,1058.3 L86.2,1053.5 L88.3,1048.7 L90.7,1044.0 L93.3,1039.4 L96.0,1034.9 L98.8,1030.5 L101.7,1026.1 L104.7,1021.9 L107.7,1017.7 L110.7,1013.5 L113.8,1009.4 L116.8,1005.2 L119.6,1001.0 L122.1,996.6 L124.2,992.0 L125.5,987.0 Z"/></clipPath>
<filter id="cmap" x="0" y="0" width="2880" height="1800" filterUnits="userSpaceOnUse" color-interpolation-filters="sRGB"><feComponentTransfer><feFuncR type="table" tableValues="0.773 0.774 0.775 0.777 0.778 0.780 0.781 0.783 0.784 0.784 0.784 0.784 0.784 0.784 0.784 0.784 0.784 0.782 0.779 0.776 0.774 0.771 0.769 0.741 0.714 0.686 0.659 0.631 0.604 0.576 0.549 0.529 0.510 0.490 0.471 0.451 0.431 0.412 0.392 0.365 0.337 0.310 0.282 0.255 0.227 0.200 0.173 0.159 0.146 0.133 0.120 0.107 0.094 0.084 0.073 0.063 0.052 0.042 0.031 0.030 0.029 0.027 0.026 0.025 0.024 0.029 0.034 0.039 0.044 0.050 0.055 0.077 0.100 0.123 0.145 0.168 0.190 0.213 0.235 0.259 0.282 0.306 0.329 0.353 0.376 0.400 0.424 0.447 0.471 0.494 0.518 0.541 0.565 0.588 0.612 0.625 0.638 0.651 0.664 0.677 0.690"/><feFuncG type="table" tableValues="0.227 0.225 0.224 0.222 0.220 0.218 0.216 0.214 0.212 0.211 0.210 0.209 0.208 0.207 0.206 0.205 0.204 0.204 0.204 0.204 0.204 0.204 0.204 0.209 0.214 0.219 0.224 0.228 0.233 0.238 0.243 0.250 0.257 0.264 0.271 0.277 0.284 0.291 0.298 0.312 0.325 0.339 0.353 0.367 0.380 0.394 0.408 0.417 0.426 0.435 0.444 0.454 0.463 0.484 0.505 0.525 0.546 0.567 0.588 0.603 0.617 0.631 0.646 0.660 0.675 0.682 0.690 0.698 0.706 0.714 0.722 0.727 0.733 0.739 0.745 0.751 0.757 0.763 0.769 0.767 0.765 0.763 0.761 0.759 0.757 0.755 0.753 0.755 0.757 0.759 0.761 0.763 0.765 0.767 0.769 0.770 0.771 0.773 0.774 0.775 0.776"/><feFuncB type="table" tableValues="0.133 0.151 0.169 0.186 0.204 0.222 0.239 0.257 0.275 0.304 0.333 0.363 0.392 0.422 0.451 0.480 0.510 0.541 0.573 0.604 0.635 0.667 0.698 0.709 0.720 0.730 0.741 0.752 0.763 0.774 0.784 0.786 0.788 0.790 0.792 0.794 0.796 0.798 0.800 0.800 0.800 0.800 0.800 0.800 0.800 0.800 0.800 0.801 0.803 0.804 0.805 0.807 0.808 0.784 0.761 0.737 0.714 0.690 0.667 0.642 0.617 0.592 0.567 0.542 0.518 0.502 0.486 0.471 0.455 0.439 0.424 0.400 0.376 0.353 0.329 0.306 0.282 0.259 0.235 0.224 0.212 0.200 0.188 0.176 0.165 0.153 0.141 0.141 0.141 0.141 0.141 0.141 0.141 0.141 0.141 0.144 0.146 0.149 0.152 0.154 0.157"/></feComponentTransfer></filter>
<filter id="b2" x="-30%" y="-30%" width="160%" height="160%" color-interpolation-filters="sRGB"><feGaussianBlur stdDeviation="2"/></filter>
<filter id="b4" x="-30%" y="-30%" width="160%" height="160%" color-interpolation-filters="sRGB"><feGaussianBlur stdDeviation="4"/></filter>
<filter id="b6" x="-30%" y="-30%" width="160%" height="160%" color-interpolation-filters="sRGB"><feGaussianBlur stdDeviation="6"/></filter>
<filter id="b8" x="-30%" y="-30%" width="160%" height="160%" color-interpolation-filters="sRGB"><feGaussianBlur stdDeviation="8"/></filter>
<filter id="b10" x="-30%" y="-30%" width="160%" height="160%" color-interpolation-filters="sRGB"><feGaussianBlur stdDeviation="10"/></filter>
<filter id="b12" x="-30%" y="-30%" width="160%" height="160%" color-interpolation-filters="sRGB"><feGaussianBlur stdDeviation="12"/></filter>
<filter id="b14" x="-30%" y="-30%" width="160%" height="160%" color-interpolation-filters="sRGB"><feGaussianBlur stdDeviation="14"/></filter>
<filter id="b16" x="-30%" y="-30%" width="160%" height="160%" color-interpolation-filters="sRGB"><feGaussianBlur stdDeviation="16"/></filter>
<filter id="b18" x="-30%" y="-30%" width="160%" height="160%" color-interpolation-filters="sRGB"><feGaussianBlur stdDeviation="18"/></filter>
<filter id="b20" x="-30%" y="-30%" width="160%" height="160%" color-interpolation-filters="sRGB"><feGaussianBlur stdDeviation="20"/></filter>
<filter id="b22" x="-30%" y="-30%" width="160%" height="160%" color-interpolation-filters="sRGB"><feGaussianBlur stdDeviation="22"/></filter>
<filter id="b24" x="-30%" y="-30%" width="160%" height="160%" color-interpolation-filters="sRGB"><feGaussianBlur stdDeviation="24"/></filter>
<filter id="b26" x="-30%" y="-30%" width="160%" height="160%" color-interpolation-filters="sRGB"><feGaussianBlur stdDeviation="26"/></filter>
<filter id="b28" x="-30%" y="-30%" width="160%" height="160%" color-interpolation-filters="sRGB"><feGaussianBlur stdDeviation="28"/></filter>
<filter id="b30" x="-30%" y="-30%" width="160%" height="160%" color-interpolation-filters="sRGB"><feGaussianBlur stdDeviation="30"/></filter>
<filter id="b32" x="-30%" y="-30%" width="160%" height="160%" color-interpolation-filters="sRGB"><feGaussianBlur stdDeviation="32"/></filter>
<filter id="b34" x="-30%" y="-30%" width="160%" height="160%" color-interpolation-filters="sRGB"><feGaussianBlur stdDeviation="34"/></filter>
<filter id="b36" x="-30%" y="-30%" width="160%" height="160%" color-interpolation-filters="sRGB"><feGaussianBlur stdDeviation="36"/></filter>
<filter id="b38" x="-30%" y="-30%" width="160%" height="160%" color-interpolation-filters="sRGB"><feGaussianBlur stdDeviation="38"/></filter>
<filter id="b40" x="-30%" y="-30%" width="160%" height="160%" color-interpolation-filters="sRGB"><feGaussianBlur stdDeviation="40"/></filter>
<filter id="b42" x="-30%" y="-30%" width="160%" height="160%" color-interpolation-filters="sRGB"><feGaussianBlur stdDeviation="42"/></filter>
<filter id="b44" x="-30%" y="-30%" width="160%" height="160%" color-interpolation-filters="sRGB"><feGaussianBlur stdDeviation="44"/></filter>
<filter id="b46" x="-30%" y="-30%" width="160%" height="160%" color-interpolation-filters="sRGB"><feGaussianBlur stdDeviation="46"/></filter>
<filter id="b48" x="-30%" y="-30%" width="160%" height="160%" color-interpolation-filters="sRGB"><feGaussianBlur stdDeviation="48"/></filter>
<filter id="b50" x="-30%" y="-30%" width="160%" height="160%" color-interpolation-filters="sRGB"><feGaussianBlur stdDeviation="50"/></filter>
<filter id="b52" x="-30%" y="-30%" width="160%" height="160%" color-interpolation-filters="sRGB"><feGaussianBlur stdDeviation="52"/></filter>
<filter id="b54" x="-30%" y="-30%" width="160%" height="160%" color-interpolation-filters="sRGB"><feGaussianBlur stdDeviation="54"/></filter>
<filter id="b56" x="-30%" y="-30%" width="160%" height="160%" color-interpolation-filters="sRGB"><feGaussianBlur stdDeviation="56"/></filter>
<filter id="b58" x="-30%" y="-30%" width="160%" height="160%" color-interpolation-filters="sRGB"><feGaussianBlur stdDeviation="58"/></filter>
<filter id="b60" x="-30%" y="-30%" width="160%" height="160%" color-interpolation-filters="sRGB"><feGaussianBlur stdDeviation="60"/></filter>
<linearGradient id="rtg" gradientUnits="userSpaceOnUse" x1="0" y1="550" x2="0" y2="610"><stop offset="0" stop-color="#8A2410"/><stop offset="0.45" stop-color="#B83218"/><stop offset="1" stop-color="#C43A1E"/></linearGradient>
<linearGradient id="rbg" gradientUnits="userSpaceOnUse" x1="0" y1="1372" x2="0" y2="1424"><stop offset="0" stop-color="#D54A28"/><stop offset="0.35" stop-color="#E25634"/><stop offset="0.75" stop-color="#FF7252"/><stop offset="1" stop-color="#E2431F"/></linearGradient>
</defs>
<g clip-path="url(#bclip)">
<g filter="url(#cmap)">
<rect x="0" y="300" width="2880" height="1400" fill="#000"/>
<path d="M280.0,470.0 L1340.0,470.0 C1340.3,491.7 1337.0,558.0 1342.0,600.0 C1347.0,642.0 1360.3,699.8 1370.0,722.0 C1379.7,744.2 1361.7,729.2 1400.0,733.0 C1438.3,736.8 1516.7,739.8 1600.0,745.0 C1683.3,750.2 1800.0,758.2 1900.0,764.0 C2000.0,769.8 2108.3,770.0 2200.0,780.0 C2291.7,790.0 2396.3,805.5 2450.0,824.0 C2503.7,842.5 2505.2,869.5 2522.0,891.0 C2538.8,912.5 2542.2,937.0 2551.0,953.0 C2559.8,969.0 2571.0,981.3 2575.0,987.0 C2571.0,992.7 2559.8,1005.0 2551.0,1021.0 C2542.2,1037.0 2538.8,1062.0 2522.0,1083.0 C2505.2,1104.0 2503.7,1128.5 2450.0,1147.0 C2396.3,1165.5 2291.7,1185.8 2200.0,1194.0 C2108.3,1202.2 2000.0,1194.0 1900.0,1196.0 C1800.0,1198.0 1683.3,1198.5 1600.0,1206.0 C1516.7,1213.5 1438.3,1233.3 1400.0,1241.0 C1361.7,1248.7 1379.7,1229.8 1370.0,1252.0 C1360.3,1274.2 1347.0,1332.0 1342.0,1374.0 C1337.0,1416.0 1340.3,1482.3 1340.0,1504.0 L280.0,1504.0 L285.0,1229.0 C285.8,1209.8 279.2,1139.5 290.0,1114.0 C300.8,1088.5 323.3,1079.3 350.0,1076.0 C376.7,1072.7 408.3,1086.5 450.0,1094.0 C491.7,1101.5 550.0,1116.0 600.0,1121.0 C650.0,1126.0 700.0,1122.0 750.0,1124.0 C800.0,1126.0 866.7,1135.0 900.0,1133.0 C933.3,1131.0 934.3,1127.2 950.0,1112.0 C965.7,1096.8 984.0,1062.8 994.0,1042.0 C1004.0,1021.2 1007.3,996.2 1010.0,987.0 C1007.3,977.8 1004.0,952.8 994.0,932.0 C984.0,911.2 965.7,877.2 950.0,862.0 C934.3,846.8 933.3,843.0 900.0,841.0 C866.7,839.0 800.0,848.0 750.0,850.0 C700.0,852.0 650.0,848.0 600.0,853.0 C550.0,858.0 491.7,872.5 450.0,880.0 C408.3,887.5 376.7,901.3 350.0,898.0 C323.3,894.7 300.8,885.5 290.0,860.0 C279.2,834.5 285.8,764.2 285.0,745.0 L280.0,470.0 Z" fill="rgb(28,28,28)" filter="url(#b18)"/>
<path d="M293.0,745.0 C294.2,750.8 290.5,771.2 300.0,780.0 C309.5,788.8 325.0,787.2 350.0,798.0 C375.0,808.8 408.3,839.7 450.0,845.0 C491.7,850.3 550.0,833.8 600.0,830.0 C650.0,826.2 700.0,827.2 750.0,822.0 C800.0,816.8 850.0,808.2 900.0,799.0 C950.0,789.8 1000.0,778.2 1050.0,767.0 C1100.0,755.8 1158.3,748.8 1200.0,732.0 C1241.7,715.2 1275.0,688.0 1300.0,666.0 C1325.0,644.0 1340.0,632.7 1350.0,600.0 C1360.0,567.3 1358.3,491.7 1360.0,470.0 L253.0,470.0 L253.0,745.0 L293.0,745.0 Z" fill="rgb(56,56,56)" filter="url(#b10)"/>
<path d="M293.0,1229.0 C294.2,1223.2 290.5,1202.8 300.0,1194.0 C309.5,1185.2 325.0,1186.8 350.0,1176.0 C375.0,1165.2 408.3,1134.3 450.0,1129.0 C491.7,1123.7 550.0,1140.2 600.0,1144.0 C650.0,1147.8 700.0,1146.8 750.0,1152.0 C800.0,1157.2 850.0,1165.8 900.0,1175.0 C950.0,1184.2 1000.0,1195.8 1050.0,1207.0 C1100.0,1218.2 1158.3,1225.2 1200.0,1242.0 C1241.7,1258.8 1275.0,1286.0 1300.0,1308.0 C1325.0,1330.0 1340.0,1341.3 1350.0,1374.0 C1360.0,1406.7 1358.3,1482.3 1360.0,1504.0 L253.0,1504.0 L253.0,1229.0 L293.0,1229.0 Z" fill="rgb(56,56,56)" filter="url(#b10)"/>
<path d="M240.0,768.0 C251.7,764.0 286.7,749.2 310.0,744.0 C333.3,738.8 356.7,729.3 380.0,737.0 C403.3,744.7 413.3,780.2 450.0,790.0 C486.7,799.8 550.0,796.0 600.0,796.0 C650.0,796.0 700.0,794.8 750.0,790.0 C800.0,785.2 850.0,777.5 900.0,767.0 C950.0,756.5 1000.0,740.7 1050.0,727.0 C1100.0,713.3 1158.3,705.3 1200.0,685.0 C1241.7,664.7 1281.7,640.8 1300.0,605.0 C1318.3,569.2 1308.3,492.5 1310.0,470.0 L200.0,470.0 L200.0,768.0 L240.0,768.0 Z" fill="rgb(84,84,84)" filter="url(#b6)"/>
<path d="M240.0,1206.0 C251.7,1210.0 286.7,1224.8 310.0,1230.0 C333.3,1235.2 356.7,1244.7 380.0,1237.0 C403.3,1229.3 413.3,1193.8 450.0,1184.0 C486.7,1174.2 550.0,1178.0 600.0,1178.0 C650.0,1178.0 700.0,1179.2 750.0,1184.0 C800.0,1188.8 850.0,1196.5 900.0,1207.0 C950.0,1217.5 1000.0,1233.3 1050.0,1247.0 C1100.0,1260.7 1158.3,1268.7 1200.0,1289.0 C1241.7,1309.3 1281.7,1333.2 1300.0,1369.0 C1318.3,1404.8 1308.3,1481.5 1310.0,1504.0 L200.0,1504.0 L200.0,1206.0 L240.0,1206.0 Z" fill="rgb(84,84,84)" filter="url(#b6)"/>
<path d="M240.0,766.0 C251.7,761.8 286.7,746.8 310.0,741.0 C333.3,735.2 356.7,728.3 380.0,731.0 C403.3,733.7 413.3,748.8 450.0,757.0 C486.7,765.2 550.0,777.0 600.0,780.0 C650.0,783.0 700.0,780.3 750.0,775.0 C800.0,769.7 850.0,759.2 900.0,748.0 C950.0,736.8 1000.0,723.3 1050.0,708.0 C1100.0,692.7 1158.3,674.0 1200.0,656.0 C1241.7,638.0 1282.5,631.0 1300.0,600.0 C1317.5,569.0 1304.2,491.7 1305.0,470.0 L200.0,470.0 L200.0,766.0 L240.0,766.0 Z" fill="rgb(122,122,122)" filter="url(#b6)"/>
<path d="M240.0,1208.0 C251.7,1212.2 286.7,1227.2 310.0,1233.0 C333.3,1238.8 356.7,1245.7 380.0,1243.0 C403.3,1240.3 413.3,1225.2 450.0,1217.0 C486.7,1208.8 550.0,1197.0 600.0,1194.0 C650.0,1191.0 700.0,1193.7 750.0,1199.0 C800.0,1204.3 850.0,1214.8 900.0,1226.0 C950.0,1237.2 1000.0,1250.7 1050.0,1266.0 C1100.0,1281.3 1158.3,1300.0 1200.0,1318.0 C1241.7,1336.0 1282.5,1343.0 1300.0,1374.0 C1317.5,1405.0 1304.2,1482.3 1305.0,1504.0 L200.0,1504.0 L200.0,1208.0 L240.0,1208.0 Z" fill="rgb(122,122,122)" filter="url(#b6)"/>
<path d="M240.0,764.0 C251.7,759.7 286.7,744.8 310.0,738.0 C333.3,731.2 356.7,725.8 380.0,723.0 C403.3,720.2 413.3,718.7 450.0,721.0 C486.7,723.3 550.0,735.0 600.0,737.0 C650.0,739.0 700.0,739.8 750.0,733.0 C800.0,726.2 850.0,709.5 900.0,696.0 C950.0,682.5 1000.0,668.0 1050.0,652.0 C1100.0,636.0 1173.3,630.3 1200.0,600.0 C1226.7,569.7 1208.3,491.7 1210.0,470.0 L200.0,470.0 L200.0,764.0 L240.0,764.0 Z" fill="rgb(158,158,158)" filter="url(#b6)"/>
<path d="M240.0,1210.0 C251.7,1214.3 286.7,1229.2 310.0,1236.0 C333.3,1242.8 356.7,1248.2 380.0,1251.0 C403.3,1253.8 413.3,1255.3 450.0,1253.0 C486.7,1250.7 550.0,1239.0 600.0,1237.0 C650.0,1235.0 700.0,1234.2 750.0,1241.0 C800.0,1247.8 850.0,1264.5 900.0,1278.0 C950.0,1291.5 1000.0,1306.0 1050.0,1322.0 C1100.0,1338.0 1173.3,1343.7 1200.0,1374.0 C1226.7,1404.3 1208.3,1482.3 1210.0,1504.0 L200.0,1504.0 L200.0,1210.0 L240.0,1210.0 Z" fill="rgb(158,158,158)" filter="url(#b6)"/>
<path d="M240.0,763.0 C251.7,758.5 286.7,743.3 310.0,736.0 C333.3,728.7 356.7,722.7 380.0,719.0 C403.3,715.3 413.3,714.2 450.0,714.0 C486.7,713.8 550.0,716.7 600.0,718.0 C650.0,719.3 700.0,728.0 750.0,722.0 C800.0,716.0 850.0,696.0 900.0,682.0 C950.0,668.0 1003.3,652.0 1050.0,638.0 C1096.7,624.0 1156.7,626.0 1180.0,598.0 C1203.3,570.0 1188.3,491.3 1190.0,470.0 L200.0,470.0 L200.0,763.0 L240.0,763.0 Z" fill="rgb(199,199,199)" filter="url(#b6)"/>
<path d="M240.0,1211.0 C251.7,1215.5 286.7,1230.7 310.0,1238.0 C333.3,1245.3 356.7,1251.3 380.0,1255.0 C403.3,1258.7 413.3,1259.8 450.0,1260.0 C486.7,1260.2 550.0,1257.3 600.0,1256.0 C650.0,1254.7 700.0,1246.0 750.0,1252.0 C800.0,1258.0 850.0,1278.0 900.0,1292.0 C950.0,1306.0 1003.3,1322.0 1050.0,1336.0 C1096.7,1350.0 1156.7,1348.0 1180.0,1376.0 C1203.3,1404.0 1188.3,1482.7 1190.0,1504.0 L200.0,1504.0 L200.0,1211.0 L240.0,1211.0 Z" fill="rgb(199,199,199)" filter="url(#b6)"/>
<path d="M240.0,762.0 C251.7,757.3 286.7,742.0 310.0,734.0 C333.3,726.0 356.7,719.3 380.0,714.0 C403.3,708.7 413.3,706.8 450.0,702.0 C486.7,697.2 550.0,689.2 600.0,685.0 C650.0,680.8 700.0,687.0 750.0,677.0 C800.0,667.0 850.0,636.5 900.0,625.0 C950.0,613.5 1013.3,612.5 1050.0,608.0 C1086.7,603.5 1106.7,621.0 1120.0,598.0 C1133.3,575.0 1128.3,491.3 1130.0,470.0 L200.0,470.0 L200.0,762.0 L240.0,762.0 Z" fill="rgb(242,242,242)" filter="url(#b8)"/>
<path d="M240.0,1212.0 C251.7,1216.7 286.7,1232.0 310.0,1240.0 C333.3,1248.0 356.7,1254.7 380.0,1260.0 C403.3,1265.3 413.3,1267.2 450.0,1272.0 C486.7,1276.8 550.0,1284.8 600.0,1289.0 C650.0,1293.2 700.0,1287.0 750.0,1297.0 C800.0,1307.0 850.0,1337.5 900.0,1349.0 C950.0,1360.5 1013.3,1361.5 1050.0,1366.0 C1086.7,1370.5 1106.7,1353.0 1120.0,1376.0 C1133.3,1399.0 1128.3,1482.7 1130.0,1504.0 L200.0,1504.0 L200.0,1212.0 L240.0,1212.0 Z" fill="rgb(242,242,242)" filter="url(#b8)"/>
<path d="M1060.0,987.0 C1060.0,968.7 1096.7,947.0 1120.0,930.0 C1143.3,913.0 1170.0,899.2 1200.0,885.0 C1230.0,870.8 1266.7,859.2 1300.0,845.0 C1333.3,830.8 1350.0,812.8 1400.0,800.0 C1450.0,787.2 1516.7,770.3 1600.0,768.0 C1683.3,765.7 1800.0,780.3 1900.0,786.0 C2000.0,791.7 2108.3,792.0 2200.0,802.0 C2291.7,812.0 2397.5,828.8 2450.0,846.0 C2502.5,863.2 2499.2,881.5 2515.0,905.0 C2530.8,928.5 2545.0,959.8 2545.0,987.0 C2545.0,1014.2 2530.8,1044.8 2515.0,1068.0 C2499.2,1091.2 2502.5,1109.0 2450.0,1126.0 C2397.5,1143.0 2291.7,1162.0 2200.0,1170.0 C2108.3,1178.0 2000.0,1172.0 1900.0,1174.0 C1800.0,1176.0 1683.3,1183.5 1600.0,1182.0 C1516.7,1180.5 1450.0,1174.5 1400.0,1165.0 C1350.0,1155.5 1333.3,1138.3 1300.0,1125.0 C1266.7,1111.7 1230.0,1099.2 1200.0,1085.0 C1170.0,1070.8 1143.3,1056.3 1120.0,1040.0 C1096.7,1023.7 1060.0,1005.3 1060.0,987.0 Z" fill="rgb(36,36,36)" filter="url(#b30)"/>
<path d="M1180.0,987.0 C1180.0,974.5 1210.0,962.5 1230.0,950.0 C1250.0,937.5 1271.7,935.7 1300.0,912.0 C1328.3,888.3 1350.0,833.0 1400.0,808.0 C1450.0,783.0 1516.7,766.7 1600.0,762.0 C1683.3,757.3 1800.0,774.0 1900.0,780.0 C2000.0,786.0 2108.3,787.0 2200.0,798.0 C2291.7,809.0 2399.2,828.2 2450.0,846.0 C2500.8,863.8 2490.8,887.3 2505.0,905.0 C2519.2,922.7 2528.3,938.3 2535.0,952.0 C2541.7,965.7 2545.0,975.7 2545.0,987.0 C2545.0,998.3 2541.7,1006.2 2535.0,1020.0 C2528.3,1033.8 2519.2,1053.3 2505.0,1070.0 C2490.8,1086.7 2500.8,1104.2 2450.0,1120.0 C2399.2,1135.8 2291.7,1155.3 2200.0,1165.0 C2108.3,1174.7 2000.0,1176.8 1900.0,1178.0 C1800.0,1179.2 1683.3,1175.0 1600.0,1172.0 C1516.7,1169.0 1450.0,1176.2 1400.0,1160.0 C1350.0,1143.8 1328.3,1097.5 1300.0,1075.0 C1271.7,1052.5 1250.0,1039.7 1230.0,1025.0 C1210.0,1010.3 1180.0,999.5 1180.0,987.0 Z" fill="rgb(56,56,56)" filter="url(#b20)"/>
<path d="M1440.0,987.0 C1440.0,971.2 1480.0,956.2 1500.0,940.0 C1520.0,923.8 1543.3,905.8 1560.0,890.0 C1576.7,874.2 1543.3,856.8 1600.0,845.0 C1656.7,833.2 1800.0,821.2 1900.0,819.0 C2000.0,816.8 2108.3,816.2 2200.0,832.0 C2291.7,847.8 2401.7,888.2 2450.0,914.0 C2498.3,939.8 2490.0,963.2 2490.0,987.0 C2490.0,1010.8 2498.3,1031.5 2450.0,1057.0 C2401.7,1082.5 2291.7,1123.3 2200.0,1140.0 C2108.3,1156.7 2000.0,1162.3 1900.0,1157.0 C1800.0,1151.7 1656.7,1120.8 1600.0,1108.0 C1543.3,1095.2 1576.7,1092.2 1560.0,1080.0 C1543.3,1067.8 1520.0,1050.5 1500.0,1035.0 C1480.0,1019.5 1440.0,1002.8 1440.0,987.0 Z" fill="rgb(84,84,84)" filter="url(#b18)"/>
<path d="M1610.0,987.0 C1610.0,978.7 1611.7,979.0 1660.0,962.0 C1708.3,945.0 1810.0,897.8 1900.0,885.0 C1990.0,872.2 2108.3,871.2 2200.0,885.0 C2291.7,898.8 2405.0,951.0 2450.0,968.0 C2495.0,985.0 2470.0,981.7 2470.0,987.0 C2470.0,992.3 2495.0,981.2 2450.0,1000.0 C2405.0,1018.8 2291.7,1080.8 2200.0,1100.0 C2108.3,1119.2 1990.0,1129.7 1900.0,1115.0 C1810.0,1100.3 1708.3,1033.3 1660.0,1012.0 C1611.7,990.7 1610.0,995.3 1610.0,987.0 Z" fill="rgb(105,105,105)" filter="url(#b24)"/>
<path d="M1700.0,987.0 C1700.0,979.7 1716.7,977.8 1750.0,968.0 C1783.3,958.2 1841.7,937.3 1900.0,928.0 C1958.3,918.7 2041.7,913.7 2100.0,912.0 C2158.3,910.3 2200.0,909.7 2250.0,918.0 C2300.0,926.3 2368.3,950.5 2400.0,962.0 C2431.7,973.5 2440.0,978.7 2440.0,987.0 C2440.0,995.3 2431.7,997.3 2400.0,1012.0 C2368.3,1026.7 2300.0,1061.7 2250.0,1075.0 C2200.0,1088.3 2158.3,1090.5 2100.0,1092.0 C2041.7,1093.5 1958.3,1097.3 1900.0,1084.0 C1841.7,1070.7 1783.3,1028.2 1750.0,1012.0 C1716.7,995.8 1700.0,994.3 1700.0,987.0 Z" fill="rgb(128,128,128)" filter="url(#b26)"/>
<path d="M1250,987 L1600,980 L1800,975 L2000,973 L2300,974 L2450,977 L2590,987 L2450,997 L2300,1000 L2000,1001 L1800,999 L1600,994 Z" fill="rgb(133,133,133)" filter="url(#b4)"/>
<path d="M1500,987 L1800,983.5 L2000,981.5 L2300,982 L2480,985 L2570,987 L2480,989 L2300,992 L2000,992.5 L1800,990.5 Z" fill="rgb(163,163,163)" filter="url(#b2)"/>
<path d="M1550,987 L1900,985 L2100,984.6 L2350,985.4 L2480,987 L2350,988.6 L2100,989.4 L1900,989 Z" fill="rgb(219,219,219)" filter="url(#b2)"/>
<rect x="766" y="986.3" width="800" height="1.4" fill="rgb(51,51,51)" opacity="0.55"/>
<rect x="2500" y="986.3" width="246" height="1.4" fill="rgb(51,51,51)" opacity="0.55"/>
<path d="M124,982 L170,984 L214,987 L170,990 L124,992 Z" fill="rgb(115,115,115)"/>
<path d="M124,985.5 L200,986.5 L200,987.5 L124,988.5 Z" fill="rgb(230,230,230)"/>
<path d="M125.5,987.0 L124.2,982.2 L122.0,977.8 L119.6,973.5 L116.9,969.2 L114.0,965.0 L110.9,960.8 L107.8,956.5 L104.6,952.3 L101.4,948.0 L98.4,943.6 L95.4,939.1 L92.7,934.5 L90.2,929.9 L88.0,925.1 L86.2,920.3 L84.7,915.4 L83.6,910.5 L83.0,905.6 L82.8,900.7 L83.2,895.9 L83.9,891.1 L85.1,886.3 L86.6,881.6 L88.5,877.0 L90.8,872.4 L93.3,867.9 L96.0,863.5 L99.0,859.1 L102.2,854.9 L105.6,850.8 L109.1,846.7 L112.7,842.8 L116.4,839.0 L120.1,835.3 L123.9,831.7 L127.8,828.2 L131.7,824.8 L135.8,821.5 L139.8,818.3 L143.9,815.1 L148.1,812.1 L152.3,809.1 L156.5,806.1 L160.8,803.3 L165.1,800.5 L169.4,797.7 L173.7,795.0 L178.1,792.3 L182.5,789.6 L186.9,787.0 L191.3,784.4 L195.8,781.8 L200.2,779.3 L204.7,776.8 L209.2,774.4 L213.7,771.9 L218.2,769.5 L222.8,767.1 L227.3,764.8 L231.9,762.5 L236.5,760.2 L241.1,757.9 L245.7,755.7 L250.3,753.5 L254.9,751.3 L259.6,749.1 L264.2,747.0 L268.9,744.9 L273.6,742.8 L278.3,740.8 L283.0,738.7 L287.7,736.7 L292.4,734.7 L297.2,732.8 L301.9,730.8 L306.7,728.9 L311.5,727.0 L316.3,725.2 L321.1,723.3 L325.9,721.5 L330.7,719.7" fill="none" stroke="rgb(61,61,61)" stroke-width="13"/>
<path d="M125.5,987.0 L124.2,982.2 L122.0,977.8 L119.6,973.5 L116.9,969.2 L114.0,965.0 L110.9,960.8 L107.8,956.5 L104.6,952.3 L101.4,948.0 L98.4,943.6 L95.4,939.1 L92.7,934.5 L90.2,929.9 L88.0,925.1 L86.2,920.3 L84.7,915.4 L83.6,910.5 L83.0,905.6 L82.8,900.7 L83.2,895.9 L83.9,891.1 L85.1,886.3 L86.6,881.6 L88.5,877.0 L90.8,872.4 L93.3,867.9 L96.0,863.5 L99.0,859.1 L102.2,854.9 L105.6,850.8 L109.1,846.7 L112.7,842.8 L116.4,839.0 L120.1,835.3 L123.9,831.7 L127.8,828.2 L131.7,824.8 L135.8,821.5 L139.8,818.3 L143.9,815.1 L148.1,812.1 L152.3,809.1 L156.5,806.1 L160.8,803.3 L165.1,800.5 L169.4,797.7 L173.7,795.0 L178.1,792.3 L182.5,789.6 L186.9,787.0 L191.3,784.4 L195.8,781.8 L200.2,779.3 L204.7,776.8 L209.2,774.4 L213.7,771.9 L218.2,769.5 L222.8,767.1 L227.3,764.8 L231.9,762.5 L236.5,760.2 L241.1,757.9 L245.7,755.7 L250.3,753.5 L254.9,751.3 L259.6,749.1 L264.2,747.0 L268.9,744.9 L273.6,742.8 L278.3,740.8 L283.0,738.7 L287.7,736.7 L292.4,734.7 L297.2,732.8 L301.9,730.8 L306.7,728.9 L311.5,727.0 L316.3,725.2 L321.1,723.3 L325.9,721.5 L330.7,719.7" fill="none" stroke="rgb(128,128,128)" stroke-width="9"/>
<path d="M125.5,987.0 L124.2,982.2 L122.0,977.8 L119.6,973.5 L116.9,969.2 L114.0,965.0 L110.9,960.8 L107.8,956.5 L104.6,952.3 L101.4,948.0 L98.4,943.6 L95.4,939.1 L92.7,934.5 L90.2,929.9 L88.0,925.1 L86.2,920.3 L84.7,915.4 L83.6,910.5 L83.0,905.6 L82.8,900.7 L83.2,895.9 L83.9,891.1 L85.1,886.3 L86.6,881.6 L88.5,877.0 L90.8,872.4 L93.3,867.9 L96.0,863.5 L99.0,859.1 L102.2,854.9 L105.6,850.8 L109.1,846.7 L112.7,842.8 L116.4,839.0 L120.1,835.3 L123.9,831.7 L127.8,828.2 L131.7,824.8 L135.8,821.5 L139.8,818.3 L143.9,815.1 L148.1,812.1 L152.3,809.1 L156.5,806.1 L160.8,803.3 L165.1,800.5 L169.4,797.7 L173.7,795.0 L178.1,792.3 L182.5,789.6 L186.9,787.0 L191.3,784.4 L195.8,781.8 L200.2,779.3 L204.7,776.8 L209.2,774.4 L213.7,771.9 L218.2,769.5 L222.8,767.1 L227.3,764.8 L231.9,762.5 L236.5,760.2 L241.1,757.9 L245.7,755.7 L250.3,753.5 L254.9,751.3 L259.6,749.1 L264.2,747.0 L268.9,744.9 L273.6,742.8 L278.3,740.8 L283.0,738.7 L287.7,736.7 L292.4,734.7 L297.2,732.8 L301.9,730.8 L306.7,728.9 L311.5,727.0 L316.3,725.2 L321.1,723.3 L325.9,721.5 L330.7,719.7" fill="none" stroke="rgb(235,235,235)" stroke-width="5.5"/>
<path d="M125.5,987.0 L124.2,991.8 L122.0,996.2 L119.6,1000.5 L116.9,1004.8 L114.0,1009.0 L110.9,1013.2 L107.8,1017.5 L104.6,1021.7 L101.4,1026.0 L98.4,1030.4 L95.4,1034.9 L92.7,1039.5 L90.2,1044.1 L88.0,1048.9 L86.2,1053.7 L84.7,1058.6 L83.6,1063.5 L83.0,1068.4 L82.8,1073.3 L83.2,1078.1 L83.9,1082.9 L85.1,1087.7 L86.6,1092.4 L88.5,1097.0 L90.8,1101.6 L93.3,1106.1 L96.0,1110.5 L99.0,1114.9 L102.2,1119.1 L105.6,1123.2 L109.1,1127.3 L112.7,1131.2 L116.4,1135.0 L120.1,1138.7 L123.9,1142.3 L127.8,1145.8 L131.7,1149.2 L135.8,1152.5 L139.8,1155.7 L143.9,1158.9 L148.1,1161.9 L152.3,1164.9 L156.5,1167.9 L160.8,1170.7 L165.1,1173.5 L169.4,1176.3 L173.7,1179.0 L178.1,1181.7 L182.5,1184.4 L186.9,1187.0 L191.3,1189.6 L195.8,1192.2 L200.2,1194.7 L204.7,1197.2 L209.2,1199.6 L213.7,1202.1 L218.2,1204.5 L222.8,1206.9 L227.3,1209.2 L231.9,1211.5 L236.5,1213.8 L241.1,1216.1 L245.7,1218.3 L250.3,1220.5 L254.9,1222.7 L259.6,1224.9 L264.2,1227.0 L268.9,1229.1 L273.6,1231.2 L278.3,1233.2 L283.0,1235.3 L287.7,1237.3 L292.4,1239.3 L297.2,1241.2 L301.9,1243.2 L306.7,1245.1 L311.5,1247.0 L316.3,1248.8 L321.1,1250.7 L325.9,1252.5 L330.7,1254.3" fill="none" stroke="rgb(61,61,61)" stroke-width="13"/>
<path d="M125.5,987.0 L124.2,991.8 L122.0,996.2 L119.6,1000.5 L116.9,1004.8 L114.0,1009.0 L110.9,1013.2 L107.8,1017.5 L104.6,1021.7 L101.4,1026.0 L98.4,1030.4 L95.4,1034.9 L92.7,1039.5 L90.2,1044.1 L88.0,1048.9 L86.2,1053.7 L84.7,1058.6 L83.6,1063.5 L83.0,1068.4 L82.8,1073.3 L83.2,1078.1 L83.9,1082.9 L85.1,1087.7 L86.6,1092.4 L88.5,1097.0 L90.8,1101.6 L93.3,1106.1 L96.0,1110.5 L99.0,1114.9 L102.2,1119.1 L105.6,1123.2 L109.1,1127.3 L112.7,1131.2 L116.4,1135.0 L120.1,1138.7 L123.9,1142.3 L127.8,1145.8 L131.7,1149.2 L135.8,1152.5 L139.8,1155.7 L143.9,1158.9 L148.1,1161.9 L152.3,1164.9 L156.5,1167.9 L160.8,1170.7 L165.1,1173.5 L169.4,1176.3 L173.7,1179.0 L178.1,1181.7 L182.5,1184.4 L186.9,1187.0 L191.3,1189.6 L195.8,1192.2 L200.2,1194.7 L204.7,1197.2 L209.2,1199.6 L213.7,1202.1 L218.2,1204.5 L222.8,1206.9 L227.3,1209.2 L231.9,1211.5 L236.5,1213.8 L241.1,1216.1 L245.7,1218.3 L250.3,1220.5 L254.9,1222.7 L259.6,1224.9 L264.2,1227.0 L268.9,1229.1 L273.6,1231.2 L278.3,1233.2 L283.0,1235.3 L287.7,1237.3 L292.4,1239.3 L297.2,1241.2 L301.9,1243.2 L306.7,1245.1 L311.5,1247.0 L316.3,1248.8 L321.1,1250.7 L325.9,1252.5 L330.7,1254.3" fill="none" stroke="rgb(128,128,128)" stroke-width="9"/>
<path d="M125.5,987.0 L124.2,991.8 L122.0,996.2 L119.6,1000.5 L116.9,1004.8 L114.0,1009.0 L110.9,1013.2 L107.8,1017.5 L104.6,1021.7 L101.4,1026.0 L98.4,1030.4 L95.4,1034.9 L92.7,1039.5 L90.2,1044.1 L88.0,1048.9 L86.2,1053.7 L84.7,1058.6 L83.6,1063.5 L83.0,1068.4 L82.8,1073.3 L83.2,1078.1 L83.9,1082.9 L85.1,1087.7 L86.6,1092.4 L88.5,1097.0 L90.8,1101.6 L93.3,1106.1 L96.0,1110.5 L99.0,1114.9 L102.2,1119.1 L105.6,1123.2 L109.1,1127.3 L112.7,1131.2 L116.4,1135.0 L120.1,1138.7 L123.9,1142.3 L127.8,1145.8 L131.7,1149.2 L135.8,1152.5 L139.8,1155.7 L143.9,1158.9 L148.1,1161.9 L152.3,1164.9 L156.5,1167.9 L160.8,1170.7 L165.1,1173.5 L169.4,1176.3 L173.7,1179.0 L178.1,1181.7 L182.5,1184.4 L186.9,1187.0 L191.3,1189.6 L195.8,1192.2 L200.2,1194.7 L204.7,1197.2 L209.2,1199.6 L213.7,1202.1 L218.2,1204.5 L222.8,1206.9 L227.3,1209.2 L231.9,1211.5 L236.5,1213.8 L241.1,1216.1 L245.7,1218.3 L250.3,1220.5 L254.9,1222.7 L259.6,1224.9 L264.2,1227.0 L268.9,1229.1 L273.6,1231.2 L278.3,1233.2 L283.0,1235.3 L287.7,1237.3 L292.4,1239.3 L297.2,1241.2 L301.9,1243.2 L306.7,1245.1 L311.5,1247.0 L316.3,1248.8 L321.1,1250.7 L325.9,1252.5 L330.7,1254.3" fill="none" stroke="rgb(235,235,235)" stroke-width="5.5"/>
<path d="M135.8,821.5 L139.8,818.3 L143.9,815.1 L148.1,812.1 L152.3,809.1 L156.5,806.1 L160.8,803.3 L165.1,800.5 L169.4,797.7 L173.7,795.0 L178.1,792.3 L182.5,789.6 L186.9,787.0 L191.3,784.4 L195.8,781.8 L200.2,779.3 L204.7,776.8 L209.2,774.4 L213.7,771.9 L218.2,769.5 L222.8,767.1 L227.3,764.8 L231.9,762.5 L236.5,760.2 L241.1,757.9 L245.7,755.7 L250.3,753.5 L254.9,751.3 L259.6,749.1 L264.2,747.0 L268.9,744.9 L273.6,742.8 L278.3,740.8 L283.0,738.7 L287.7,736.7 L292.4,734.7 L297.2,732.8 L301.9,730.8 L306.7,728.9 L311.5,727.0 L316.3,725.2 L321.1,723.3 L325.9,721.5 L330.7,719.7 L335.5,717.9 L340.3,716.1 L345.2,714.4 L350.0,712.6 L354.9,710.9 L359.7,709.2 L364.6,707.5 L369.5,705.9 L374.4,704.2 L379.3,702.6 L384.2,701.0 L389.1,699.4 L394.0,697.8 L398.9,696.2 L403.8,694.6 L408.8,693.1 L413.7,691.6 L418.6,690.1 L423.6,688.6 L428.5,687.1 L433.5,685.6 L438.4,684.1 L443.4,682.7 L448.3,681.2 L453.3,679.8 L458.3,678.3 L463.2,676.9 L468.2,675.5 L473.2,674.1 L478.1,672.7 L483.1,671.3 L488.1,670.0 L493.1,668.6 L498.1,667.2 L503.0,665.9 L508.0,664.5 L513.0,663.2 L518.0,661.8 L522.9,660.5 L527.9,659.2 L532.9,657.9 L537.9,656.5 L542.8,655.2 L547.8,653.9 L552.8,652.6 L557.8,651.3 L562.8,650.0 L567.7,648.7 L572.7,647.4 L577.7,646.2 L582.7,644.9 L587.6,643.6 L592.6,642.4 L597.6,641.1 L602.6,639.9 L607.6,638.7 L612.5,637.4 L617.5,636.2 L622.5,635.0 L627.5,633.8 L632.5,632.6 L637.5,631.4 L642.5,630.2 L647.5,629.1 L652.5,627.9 L657.5,626.8 L662.5,625.6 L667.5,624.5 L672.5,623.4 L677.5,622.3 L682.5,621.2 L687.6,620.1 L692.6,619.0 L697.6,617.9 L702.6,616.9 L707.7,615.8 L712.7,614.8 L717.7,613.7 L722.8,612.7 L727.8,611.7 L732.9,610.7 L737.9,609.7 L743.0,608.7 L748.0,607.8 L753.1,606.8 L758.2,605.9 L763.2,604.9 L768.3,604.0 L773.4,603.1 L778.4,602.2 L783.5,601.3 L788.6,600.4 L793.6,599.5 L798.7,598.7 L803.8,597.8 L808.9,597.0 L814.0,596.1 L819.1,595.3 L824.2,594.5 L829.2,593.7 L834.3,592.9 L839.4,592.1 L844.5,591.3 L849.6,590.6 L854.7,589.8 L859.8,589.1 L864.9,588.3 L870.0,587.6 L875.1,586.9 L880.3,586.2 L885.4,585.5 L890.5,584.8 L895.6,584.1 L900.7,583.5 L905.8,582.8 L910.9,582.2 L916.0,581.5 L921.1,580.9 L926.3,580.3 L931.4,579.7 L936.5,579.1 L941.6,578.5 L946.7,577.9 L951.8,577.3 L957.0,576.8 L962.1,576.2 L967.2,575.7 L972.3,575.2 L977.4,574.6 L982.6,574.1 L987.7,573.6 L992.8,573.1 L997.9,572.6 L1003.0,572.1 L1008.2,571.6 L1013.3,571.2 L1018.4,570.7 L1023.5,570.3 L1028.7,569.8 L1033.8,569.4 L1038.9,568.9 L1044.0,568.5 L1049.2,568.1 L1054.3,567.7 L1059.4,567.3 L1064.5,566.9 L1069.7,566.5 L1074.8,566.1 L1079.9,565.7 L1085.1,565.3 L1090.2,565.0 L1095.3,564.6 L1100.5,564.3 L1105.6,563.9 L1110.7,563.6 L1115.9,563.2 L1121.0,562.9 L1126.1,562.5 L1131.3,562.2 L1136.4,561.9 L1141.5,561.6 L1146.7,561.2 L1151.8,560.9 L1156.9,560.6 L1162.1,560.3 L1167.2,560.0 L1172.3,559.7 L1177.5,559.4 L1182.6,559.1 L1187.7,558.8 L1192.9,558.5 L1198.0,558.3 L1203.2,558.0 L1208.3,557.7 L1213.4,557.4 L1218.6,557.1 L1223.7,556.9 L1228.9,556.6 L1234.0,556.3 L1239.1,556.1 L1244.3,555.8 L1249.4,555.6 L1254.6,555.3 L1259.7,555.0 L1264.8,554.8 L1270.0,554.6 L1275.1,554.3 L1280.3,554.1 L1285.4,553.8 L1290.6,553.6 L1295.7,553.4 L1300.8,553.2 L1306.0,552.9 L1311.1,552.7 L1316.3,552.5 L1321.4,552.3 L1326.6,552.1 L1331.7,551.9 L1336.9,551.7 L1342.0,551.5 L1347.1,551.3 L1352.3,551.2 L1357.4,551.0 L1362.6,550.8 L1367.7,550.6 L1372.9,550.5 L1378.0,550.3 L1383.2,550.2 L1388.3,550.0 L1393.5,549.9 L1398.6,549.8 L1403.8,549.6 L1408.9,549.5 L1414.1,549.4 L1419.2,549.3 L1424.4,549.2 L1429.5,549.1 L1434.7,549.0 L1439.8,549.0 L1445.0,548.9 L1450.1,548.9 L1455.3,548.8 L1460.4,548.8 L1465.6,548.8 L1470.7,548.7 L1475.9,548.7 L1481.0,548.7 L1486.2,548.8 L1491.3,548.8 L1496.4,548.8 L1501.6,548.9 L1506.7,548.9 L1511.9,549.0 L1517.0,549.1 L1522.2,549.2 L1527.3,549.3 L1532.4,549.4 L1537.6,549.6 L1542.7,549.7 L1547.9,549.8 L1553.0,550.0 L1558.1,550.2 L1563.3,550.3 L1568.4,550.5 L1573.5,550.7 L1578.7,550.9 L1583.8,551.1 L1589.0,551.3 L1594.1,551.5 L1599.2,551.7 L1840.0,625.9 L1831.4,623.8 L1822.8,621.9 L1814.1,620.1 L1805.5,618.4 L1796.9,616.8 L1788.2,615.4 L1779.5,614.0 L1770.9,612.8 L1762.2,611.7 L1753.5,610.6 L1744.9,609.7 L1736.2,608.8 L1727.5,608.1 L1718.8,607.4 L1710.1,606.7 L1701.4,606.2 L1692.7,605.6 L1683.9,605.2 L1675.2,604.8 L1666.5,604.4 L1657.8,604.1 L1649.1,603.8 L1640.3,603.5 L1631.6,603.3 L1622.9,603.1 L1614.2,602.9 L1605.4,602.7 L1596.7,602.5 L1588.0,602.3 L1579.3,602.1 L1570.5,601.9 L1561.8,601.7 L1553.1,601.5 L1544.4,601.3 L1535.6,601.1 L1526.9,600.9 L1518.2,600.7 L1509.4,600.5 L1500.7,600.3 L1492.0,600.1 L1483.3,599.9 L1474.5,599.7 L1465.8,599.5 L1457.1,599.3 L1448.4,599.1 L1439.6,599.0 L1430.9,598.8 L1422.2,598.6 L1413.5,598.5 L1404.7,598.3 L1396.0,598.2 L1387.3,598.0 L1378.6,597.9 L1369.8,597.7 L1361.1,597.6 L1352.4,597.5 L1343.6,597.4 L1334.9,597.3 L1326.2,597.2 L1317.5,597.1 L1308.7,597.0 L1300.0,597.0 L1291.3,596.9 L1282.5,596.8 L1273.8,596.8 L1265.1,596.8 L1256.3,596.7 L1247.6,596.7 L1238.9,596.7 L1230.1,596.7 L1221.4,596.8 L1212.7,596.8 L1203.9,596.8 L1195.2,596.9 L1186.5,597.0 L1177.7,597.1 L1169.0,597.2 L1160.3,597.3 L1151.5,597.4 L1142.8,597.5 L1134.0,597.7 L1125.3,597.9 L1116.6,598.1 L1107.8,598.3 L1099.1,598.5 L1090.4,598.8 L1081.6,599.0 L1072.9,599.3 L1064.2,599.6 L1055.4,600.0 L1046.7,600.3 L1038.0,600.7 L1029.3,601.1 L1020.5,601.5 L1011.8,602.0 L1003.1,602.4 L994.4,602.9 L985.7,603.4 L977.0,604.0 L968.3,604.6 L959.5,605.2 L950.8,605.8 L942.1,606.4 L933.4,607.1 L924.8,607.8 L916.1,608.6 L907.4,609.4 L898.7,610.2 L890.0,611.0 L881.3,611.9 L872.7,612.8 L864.0,613.7 L855.3,614.6 L846.7,615.6 L838.0,616.6 L829.4,617.7 L820.7,618.8 L812.1,619.9 L803.4,621.0 L794.8,622.1 L786.1,623.3 L777.5,624.5 L768.9,625.8 L760.3,627.0 L751.6,628.3 L743.0,629.6 L734.4,630.9 L725.8,632.3 L717.1,633.7 L708.5,635.1 L699.9,636.5 L691.3,637.9 L682.7,639.4 L674.1,640.9 L665.5,642.4 L656.9,643.9 L648.3,645.5 L639.7,647.1 L631.1,648.7 L622.5,650.3 L613.9,651.9 L605.3,653.5 L596.7,655.2 L588.2,656.9 L579.6,658.6 L571.0,660.3 L562.4,662.1 L553.8,663.8 L545.3,665.6 L536.7,667.4 L528.2,669.3 L519.6,671.2 L511.1,673.1 L502.5,675.0 L494.0,677.0 L485.5,679.0 L477.0,681.1 L468.5,683.1 L460.0,685.3 L451.6,687.4 L443.1,689.6 L434.7,691.9 L426.3,694.2 L417.9,696.5 L409.5,698.9 L401.1,701.3 L392.7,703.8 L384.4,706.3 L376.1,708.9 L367.8,711.6 L359.5,714.3 L351.3,717.0 L343.0,719.9 L334.8,722.7 L326.6,725.7 L318.5,728.7 L310.3,731.7 L302.2,734.9 L294.1,738.1 L286.1,741.3 L278.0,744.7 L270.0,748.1 L262.0,751.6 L254.1,755.1 L246.2,758.8 L238.3,762.5 L230.4,766.3 L222.6,770.1 L214.8,774.1 L207.1,778.1 L199.3,782.2 L191.6,786.4 L184.0,790.7 L176.4,795.1 L168.8,799.5 L161.3,804.1 L153.8,808.7 L146.3,813.5 L138.9,818.3 Z" fill="#000"/>
<path d="M136.2,1152.2 L140.2,1155.4 L144.3,1158.5 L148.4,1161.6 L152.6,1164.6 L156.8,1167.6 L161.0,1170.6 L165.2,1173.5 L169.5,1176.4 L173.8,1179.2 L178.1,1182.0 L182.5,1184.7 L186.9,1187.4 L191.3,1190.0 L195.7,1192.6 L200.2,1195.2 L204.6,1197.7 L209.1,1200.2 L213.7,1202.7 L218.2,1205.1 L222.8,1207.5 L227.4,1209.8 L232.0,1212.2 L236.6,1214.4 L241.2,1216.7 L245.9,1218.9 L250.5,1221.1 L255.2,1223.3 L259.9,1225.4 L264.6,1227.5 L269.4,1229.6 L274.1,1231.6 L278.9,1233.6 L283.6,1235.6 L288.4,1237.6 L293.2,1239.6 L298.0,1241.5 L302.8,1243.4 L307.6,1245.3 L312.4,1247.2 L317.2,1249.0 L322.0,1250.8 L326.9,1252.6 L331.7,1254.4 L336.5,1256.2 L341.4,1257.9 L346.3,1259.7 L351.1,1261.4 L356.0,1263.1 L360.9,1264.8 L365.7,1266.5 L370.6,1268.1 L375.5,1269.8 L380.4,1271.4 L385.3,1273.0 L390.2,1274.6 L395.1,1276.2 L400.0,1277.7 L404.9,1279.3 L409.8,1280.9 L414.7,1282.4 L419.7,1283.9 L424.6,1285.4 L429.5,1286.9 L434.4,1288.4 L439.4,1289.9 L444.3,1291.4 L449.3,1292.8 L454.2,1294.3 L459.1,1295.7 L464.1,1297.2 L469.0,1298.6 L474.0,1300.0 L478.9,1301.4 L483.9,1302.8 L488.9,1304.2 L493.8,1305.6 L498.8,1307.0 L503.8,1308.3 L508.7,1309.7 L513.7,1311.0 L518.7,1312.4 L523.6,1313.7 L528.6,1315.0 L533.6,1316.4 L538.6,1317.7 L543.6,1319.0 L548.6,1320.2 L553.5,1321.5 L558.5,1322.8 L563.5,1324.1 L568.5,1325.3 L573.5,1326.6 L578.5,1327.8 L583.5,1329.0 L588.5,1330.2 L593.5,1331.5 L598.5,1332.7 L603.6,1333.8 L608.6,1335.0 L613.6,1336.2 L618.6,1337.4 L623.6,1338.5 L628.6,1339.7 L633.7,1340.8 L638.7,1342.0 L643.7,1343.1 L648.7,1344.2 L653.8,1345.3 L658.8,1346.4 L663.8,1347.5 L668.9,1348.6 L673.9,1349.6 L678.9,1350.7 L684.0,1351.8 L689.0,1352.8 L694.1,1353.9 L699.1,1354.9 L704.2,1355.9 L709.2,1356.9 L714.3,1357.9 L719.3,1358.9 L724.4,1359.9 L729.4,1360.9 L734.5,1361.9 L739.6,1362.8 L744.6,1363.8 L749.7,1364.7 L754.8,1365.6 L759.8,1366.6 L764.9,1367.5 L770.0,1368.4 L775.0,1369.3 L780.1,1370.2 L785.2,1371.1 L790.3,1372.0 L795.3,1372.8 L800.4,1373.7 L805.5,1374.5 L810.6,1375.4 L815.7,1376.2 L820.8,1377.0 L825.9,1377.8 L830.9,1378.6 L836.0,1379.4 L841.1,1380.2 L846.2,1381.0 L851.3,1381.8 L856.4,1382.6 L861.5,1383.3 L866.6,1384.1 L871.7,1384.8 L876.8,1385.5 L881.9,1386.2 L887.0,1387.0 L892.1,1387.7 L897.2,1388.4 L902.3,1389.1 L907.4,1389.7 L912.6,1390.4 L917.7,1391.1 L922.8,1391.7 L927.9,1392.4 L933.0,1393.0 L938.1,1393.6 L943.2,1394.3 L948.4,1394.9 L953.5,1395.5 L958.6,1396.1 L963.7,1396.7 L968.9,1397.3 L974.0,1397.8 L979.1,1398.4 L984.2,1399.0 L989.4,1399.5 L994.5,1400.1 L999.6,1400.6 L1004.7,1401.1 L1009.9,1401.7 L1015.0,1402.2 L1020.1,1402.7 L1025.3,1403.2 L1030.4,1403.7 L1035.5,1404.2 L1040.7,1404.6 L1045.8,1405.1 L1050.9,1405.6 L1056.1,1406.0 L1061.2,1406.5 L1066.3,1406.9 L1071.5,1407.3 L1076.6,1407.8 L1081.8,1408.2 L1086.9,1408.6 L1092.0,1409.0 L1097.2,1409.4 L1102.3,1409.8 L1107.5,1410.2 L1112.6,1410.5 L1117.8,1410.9 L1122.9,1411.3 L1128.0,1411.6 L1133.2,1412.0 L1138.3,1412.3 L1143.5,1412.7 L1148.6,1413.0 L1153.8,1413.3 L1158.9,1413.6 L1164.1,1413.9 L1169.2,1414.2 L1174.4,1414.5 L1179.5,1414.8 L1184.7,1415.1 L1189.8,1415.4 L1195.0,1415.7 L1200.1,1415.9 L1205.3,1416.2 L1210.4,1416.4 L1215.6,1416.7 L1220.7,1416.9 L1225.9,1417.1 L1231.0,1417.4 L1236.2,1417.6 L1241.3,1417.8 L1246.4,1418.0 L1251.6,1418.2 L1256.7,1418.4 L1261.9,1418.6 L1267.0,1418.8 L1272.2,1418.9 L1277.3,1419.1 L1282.5,1419.3 L1287.6,1419.4 L1292.8,1419.6 L1297.9,1419.7 L1303.1,1419.9 L1308.2,1420.0 L1313.4,1420.1 L1318.5,1420.3 L1323.7,1420.4 L1328.8,1420.5 L1334.0,1420.6 L1339.1,1420.7 L1344.3,1420.8 L1349.4,1420.9 L1354.6,1421.0 L1359.7,1421.1 L1364.9,1421.1 L1370.0,1421.2 L1375.2,1421.3 L1380.3,1421.3 L1385.5,1421.4 L1390.6,1421.4 L1395.7,1421.5 L1400.9,1421.5 L1406.0,1421.6 L1411.2,1421.6 L1416.3,1421.6 L1421.5,1421.7 L1426.6,1421.7 L1431.8,1421.7 L1436.9,1421.7 L1442.1,1421.7 L1447.2,1421.8 L1452.4,1421.8 L1457.5,1421.8 L1462.7,1421.8 L1467.8,1421.8 L1473.0,1421.7 L1478.1,1421.7 L1483.3,1421.7 L1488.4,1421.7 L1493.6,1421.7 L1498.7,1421.6 L1503.9,1421.6 L1509.0,1421.6 L1514.2,1421.6 L1519.3,1421.5 L1524.5,1421.5 L1529.6,1421.4 L1534.8,1421.4 L1539.9,1421.3 L1545.1,1421.3 L1550.2,1421.2 L1555.4,1421.2 L1560.5,1421.1 L1565.7,1421.1 L1570.8,1421.0 L1576.0,1421.0 L1581.1,1420.9 L1586.3,1420.8 L1591.4,1420.8 L1596.6,1420.7 L1840.0,1348.1 L1831.4,1350.2 L1822.8,1352.1 L1814.1,1353.9 L1805.5,1355.6 L1796.9,1357.2 L1788.2,1358.6 L1779.5,1360.0 L1770.9,1361.2 L1762.2,1362.3 L1753.5,1363.4 L1744.9,1364.3 L1736.2,1365.2 L1727.5,1365.9 L1718.8,1366.6 L1710.1,1367.3 L1701.4,1367.8 L1692.7,1368.4 L1683.9,1368.8 L1675.2,1369.2 L1666.5,1369.6 L1657.8,1369.9 L1649.1,1370.2 L1640.3,1370.5 L1631.6,1370.7 L1622.9,1370.9 L1614.2,1371.1 L1605.4,1371.3 L1596.7,1371.5 L1588.0,1371.7 L1579.3,1371.9 L1570.5,1372.1 L1561.8,1372.3 L1553.1,1372.5 L1544.4,1372.7 L1535.6,1372.9 L1526.9,1373.1 L1518.2,1373.3 L1509.4,1373.5 L1500.7,1373.7 L1492.0,1373.9 L1483.3,1374.1 L1474.5,1374.3 L1465.8,1374.5 L1457.1,1374.7 L1448.4,1374.9 L1439.6,1375.0 L1430.9,1375.2 L1422.2,1375.4 L1413.5,1375.5 L1404.7,1375.7 L1396.0,1375.8 L1387.3,1376.0 L1378.6,1376.1 L1369.8,1376.3 L1361.1,1376.4 L1352.4,1376.5 L1343.6,1376.6 L1334.9,1376.7 L1326.2,1376.8 L1317.5,1376.9 L1308.7,1377.0 L1300.0,1377.0 L1291.3,1377.1 L1282.5,1377.2 L1273.8,1377.2 L1265.1,1377.2 L1256.3,1377.3 L1247.6,1377.3 L1238.9,1377.3 L1230.1,1377.3 L1221.4,1377.2 L1212.7,1377.2 L1203.9,1377.2 L1195.2,1377.1 L1186.5,1377.0 L1177.7,1376.9 L1169.0,1376.8 L1160.3,1376.7 L1151.5,1376.6 L1142.8,1376.5 L1134.0,1376.3 L1125.3,1376.1 L1116.6,1375.9 L1107.8,1375.7 L1099.1,1375.5 L1090.4,1375.2 L1081.6,1375.0 L1072.9,1374.7 L1064.2,1374.4 L1055.4,1374.0 L1046.7,1373.7 L1038.0,1373.3 L1029.3,1372.9 L1020.5,1372.5 L1011.8,1372.0 L1003.1,1371.6 L994.4,1371.1 L985.7,1370.6 L977.0,1370.0 L968.3,1369.4 L959.5,1368.8 L950.8,1368.2 L942.1,1367.6 L933.4,1366.9 L924.8,1366.2 L916.1,1365.4 L907.4,1364.6 L898.7,1363.8 L890.0,1363.0 L881.3,1362.1 L872.7,1361.2 L864.0,1360.3 L855.3,1359.4 L846.7,1358.4 L838.0,1357.4 L829.4,1356.3 L820.7,1355.2 L812.1,1354.1 L803.4,1353.0 L794.8,1351.9 L786.1,1350.7 L777.5,1349.5 L768.9,1348.2 L760.3,1347.0 L751.6,1345.7 L743.0,1344.4 L734.4,1343.1 L725.8,1341.7 L717.1,1340.3 L708.5,1338.9 L699.9,1337.5 L691.3,1336.1 L682.7,1334.6 L674.1,1333.1 L665.5,1331.6 L656.9,1330.1 L648.3,1328.5 L639.7,1326.9 L631.1,1325.3 L622.5,1323.7 L613.9,1322.1 L605.3,1320.5 L596.7,1318.8 L588.2,1317.1 L579.6,1315.4 L571.0,1313.7 L562.4,1311.9 L553.8,1310.2 L545.3,1308.4 L536.7,1306.6 L528.2,1304.7 L519.6,1302.8 L511.1,1300.9 L502.5,1299.0 L494.0,1297.0 L485.5,1295.0 L477.0,1292.9 L468.5,1290.9 L460.0,1288.7 L451.6,1286.6 L443.1,1284.4 L434.7,1282.1 L426.3,1279.8 L417.9,1277.5 L409.5,1275.1 L401.1,1272.7 L392.7,1270.2 L384.4,1267.7 L376.1,1265.1 L367.8,1262.4 L359.5,1259.7 L351.3,1257.0 L343.0,1254.1 L334.8,1251.3 L326.6,1248.3 L318.5,1245.3 L310.3,1242.3 L302.2,1239.1 L294.1,1235.9 L286.1,1232.7 L278.0,1229.3 L270.0,1225.9 L262.0,1222.4 L254.1,1218.9 L246.2,1215.2 L238.3,1211.5 L230.4,1207.7 L222.6,1203.9 L214.8,1199.9 L207.1,1195.9 L199.3,1191.8 L191.6,1187.6 L184.0,1183.3 L176.4,1178.9 L168.8,1174.5 L161.3,1169.9 L153.8,1165.3 L146.3,1160.5 L138.9,1155.7 Z" fill="#000"/>
</g>
<linearGradient id="blit" gradientUnits="userSpaceOnUse" x1="0" y1="900" x2="0" y2="1320"><stop offset="0" stop-color="#FF7850" stop-opacity="0"/><stop offset="1" stop-color="#FF7850" stop-opacity="0.16"/></linearGradient>
<mask id="redm" maskUnits="userSpaceOnUse" x="0" y="0" width="2880" height="1800"><rect x="0" y="0" width="2880" height="1800" fill="#fff"/><path d="M280.0,470.0 L1340.0,470.0 C1340.3,491.7 1337.0,558.0 1342.0,600.0 C1347.0,642.0 1360.3,699.8 1370.0,722.0 C1379.7,744.2 1361.7,729.2 1400.0,733.0 C1438.3,736.8 1516.7,739.8 1600.0,745.0 C1683.3,750.2 1800.0,758.2 1900.0,764.0 C2000.0,769.8 2108.3,770.0 2200.0,780.0 C2291.7,790.0 2396.3,805.5 2450.0,824.0 C2503.7,842.5 2505.2,869.5 2522.0,891.0 C2538.8,912.5 2542.2,937.0 2551.0,953.0 C2559.8,969.0 2571.0,981.3 2575.0,987.0 C2571.0,992.7 2559.8,1005.0 2551.0,1021.0 C2542.2,1037.0 2538.8,1062.0 2522.0,1083.0 C2505.2,1104.0 2503.7,1128.5 2450.0,1147.0 C2396.3,1165.5 2291.7,1185.8 2200.0,1194.0 C2108.3,1202.2 2000.0,1194.0 1900.0,1196.0 C1800.0,1198.0 1683.3,1198.5 1600.0,1206.0 C1516.7,1213.5 1438.3,1233.3 1400.0,1241.0 C1361.7,1248.7 1379.7,1229.8 1370.0,1252.0 C1360.3,1274.2 1347.0,1332.0 1342.0,1374.0 C1337.0,1416.0 1340.3,1482.3 1340.0,1504.0 L280.0,1504.0 L285.0,1229.0 C285.8,1209.8 279.2,1139.5 290.0,1114.0 C300.8,1088.5 323.3,1079.3 350.0,1076.0 C376.7,1072.7 408.3,1086.5 450.0,1094.0 C491.7,1101.5 550.0,1116.0 600.0,1121.0 C650.0,1126.0 700.0,1122.0 750.0,1124.0 C800.0,1126.0 866.7,1135.0 900.0,1133.0 C933.3,1131.0 934.3,1127.2 950.0,1112.0 C965.7,1096.8 984.0,1062.8 994.0,1042.0 C1004.0,1021.2 1007.3,996.2 1010.0,987.0 C1007.3,977.8 1004.0,952.8 994.0,932.0 C984.0,911.2 965.7,877.2 950.0,862.0 C934.3,846.8 933.3,843.0 900.0,841.0 C866.7,839.0 800.0,848.0 750.0,850.0 C700.0,852.0 650.0,848.0 600.0,853.0 C550.0,858.0 491.7,872.5 450.0,880.0 C408.3,887.5 376.7,901.3 350.0,898.0 C323.3,894.7 300.8,885.5 290.0,860.0 C279.2,834.5 285.8,764.2 285.0,745.0 L280.0,470.0 Z" fill="#000" filter="url(#b14)"/></mask>
<rect x="0" y="900" width="2880" height="600" fill="url(#blit)" mask="url(#redm)"/>
<linearGradient id="shT" gradientUnits="userSpaceOnUse" x1="380" y1="0" x2="2700" y2="0"><stop offset="0" stop-color="#6E1A08" stop-opacity="0"/><stop offset="0.27" stop-color="#6E1A08" stop-opacity="1"/><stop offset="0.7" stop-color="#6E1A08" stop-opacity="1"/><stop offset="0.95" stop-color="#6E1A08" stop-opacity="0.25"/></linearGradient>
<linearGradient id="shB" gradientUnits="userSpaceOnUse" x1="380" y1="0" x2="2700" y2="0"><stop offset="0" stop-color="#FF8060" stop-opacity="0"/><stop offset="0.27" stop-color="#FF8060" stop-opacity="1"/><stop offset="0.75" stop-color="#FF8060" stop-opacity="1"/><stop offset="1" stop-color="#FF8060" stop-opacity="0.3"/></linearGradient>
<linearGradient id="shB2" gradientUnits="userSpaceOnUse" x1="380" y1="0" x2="1000" y2="0"><stop offset="0" stop-color="#E03A18" stop-opacity="0"/><stop offset="1" stop-color="#E03A18" stop-opacity="1"/></linearGradient>
<path d="M301.9,730.8 L306.7,728.9 L311.5,727.0 L316.3,725.2 L321.1,723.3 L325.9,721.5 L330.7,719.7 L335.5,717.9 L340.3,716.1 L345.2,714.4 L350.0,712.6 L354.9,710.9 L359.7,709.2 L364.6,707.5 L369.5,705.9 L374.4,704.2 L379.3,702.6 L384.2,701.0 L389.1,699.4 L394.0,697.8 L398.9,696.2 L403.8,694.6 L408.8,693.1 L413.7,691.6 L418.6,690.1 L423.6,688.6 L428.5,687.1 L433.5,685.6 L438.4,684.1 L443.4,682.7 L448.3,681.2 L453.3,679.8 L458.3,678.3 L463.2,676.9 L468.2,675.5 L473.2,674.1 L478.1,672.7 L483.1,671.3 L488.1,670.0 L493.1,668.6 L498.1,667.2 L503.0,665.9 L508.0,664.5 L513.0,663.2 L518.0,661.8 L522.9,660.5 L527.9,659.2 L532.9,657.9 L537.9,656.5 L542.8,655.2 L547.8,653.9 L552.8,652.6 L557.8,651.3 L562.8,650.0 L567.7,648.7 L572.7,647.4 L577.7,646.2 L582.7,644.9 L587.6,643.6 L592.6,642.4 L597.6,641.1 L602.6,639.9 L607.6,638.7 L612.5,637.4 L617.5,636.2 L622.5,635.0 L627.5,633.8 L632.5,632.6 L637.5,631.4 L642.5,630.2 L647.5,629.1 L652.5,627.9 L657.5,626.8 L662.5,625.6 L667.5,624.5 L672.5,623.4 L677.5,622.3 L682.5,621.2 L687.6,620.1 L692.6,619.0 L697.6,617.9 L702.6,616.9 L707.7,615.8 L712.7,614.8 L717.7,613.7 L722.8,612.7 L727.8,611.7 L732.9,610.7 L737.9,609.7 L743.0,608.7 L748.0,607.8 L753.1,606.8 L758.2,605.9 L763.2,604.9 L768.3,604.0 L773.4,603.1 L778.4,602.2 L783.5,601.3 L788.6,600.4 L793.6,599.5 L798.7,598.7 L803.8,597.8 L808.9,597.0 L814.0,596.1 L819.1,595.3 L824.2,594.5 L829.2,593.7 L834.3,592.9 L839.4,592.1 L844.5,591.3 L849.6,590.6 L854.7,589.8 L859.8,589.1 L864.9,588.3 L870.0,587.6 L875.1,586.9 L880.3,586.2 L885.4,585.5 L890.5,584.8 L895.6,584.1 L900.7,583.5 L905.8,582.8 L910.9,582.2 L916.0,581.5 L921.1,580.9 L926.3,580.3 L931.4,579.7 L936.5,579.1 L941.6,578.5 L946.7,577.9 L951.8,577.3 L957.0,576.8 L962.1,576.2 L967.2,575.7 L972.3,575.2 L977.4,574.6 L982.6,574.1 L987.7,573.6 L992.8,573.1 L997.9,572.6 L1003.0,572.1 L1008.2,571.6 L1013.3,571.2 L1018.4,570.7 L1023.5,570.3 L1028.7,569.8 L1033.8,569.4 L1038.9,568.9 L1044.0,568.5 L1049.2,568.1 L1054.3,567.7 L1059.4,567.3 L1064.5,566.9 L1069.7,566.5 L1074.8,566.1 L1079.9,565.7 L1085.1,565.3 L1090.2,565.0 L1095.3,564.6 L1100.5,564.3 L1105.6,563.9 L1110.7,563.6 L1115.9,563.2 L1121.0,562.9 L1126.1,562.5 L1131.3,562.2 L1136.4,561.9 L1141.5,561.6 L1146.7,561.2 L1151.8,560.9 L1156.9,560.6 L1162.1,560.3 L1167.2,560.0 L1172.3,559.7 L1177.5,559.4 L1182.6,559.1 L1187.7,558.8 L1192.9,558.5 L1198.0,558.3 L1203.2,558.0 L1208.3,557.7 L1213.4,557.4 L1218.6,557.1 L1223.7,556.9 L1228.9,556.6 L1234.0,556.3 L1239.1,556.1 L1244.3,555.8 L1249.4,555.6 L1254.6,555.3 L1259.7,555.0 L1264.8,554.8 L1270.0,554.6 L1275.1,554.3 L1280.3,554.1 L1285.4,553.8 L1290.6,553.6 L1295.7,553.4 L1300.8,553.2 L1306.0,552.9 L1311.1,552.7 L1316.3,552.5 L1321.4,552.3 L1326.6,552.1 L1331.7,551.9 L1336.9,551.7 L1342.0,551.5 L1347.1,551.3 L1352.3,551.2 L1357.4,551.0 L1362.6,550.8 L1367.7,550.6 L1372.9,550.5 L1378.0,550.3 L1383.2,550.2 L1388.3,550.0 L1393.5,549.9 L1398.6,549.8 L1403.8,549.6 L1408.9,549.5 L1414.1,549.4 L1419.2,549.3 L1424.4,549.2 L1429.5,549.1 L1434.7,549.0 L1439.8,549.0 L1445.0,548.9 L1450.1,548.9 L1455.3,548.8 L1460.4,548.8 L1465.6,548.8 L1470.7,548.7 L1475.9,548.7 L1481.0,548.7 L1486.2,548.8 L1491.3,548.8 L1496.4,548.8 L1501.6,548.9 L1506.7,548.9 L1511.9,549.0 L1517.0,549.1 L1522.2,549.2 L1527.3,549.3 L1532.4,549.4 L1537.6,549.6 L1542.7,549.7 L1547.9,549.8 L1553.0,550.0 L1558.1,550.2 L1563.3,550.3 L1568.4,550.5 L1573.5,550.7 L1578.7,550.9 L1583.8,551.1 L1589.0,551.3 L1594.1,551.5 L1599.2,551.7 L1604.4,551.9 L1609.5,552.1 L1614.6,552.4 L1619.8,552.6 L1624.9,552.8 L1630.0,553.0 L1635.2,553.3 L1640.3,553.5 L1645.5,553.7 L1650.6,554.0 L1655.7,554.2 L1660.9,554.4 L1666.0,554.7 L1671.2,554.9 L1676.3,555.1 L1681.5,555.4 L1686.6,555.6 L1691.7,555.8 L1696.9,556.0 L1702.0,556.3 L1707.2,556.5 L1712.3,556.7 L1717.5,556.9 L1722.6,557.1 L1727.8,557.3 L1732.9,557.5 L1738.1,557.7 L1743.2,557.9 L1748.4,558.1 L1753.5,558.3 L1758.7,558.5 L1763.8,558.7 L1769.0,558.9 L1774.1,559.1 L1779.3,559.3 L1784.5,559.5 L1789.6,559.7 L1794.8,559.9 L1799.9,560.1 L1805.1,560.3 L1810.2,560.5 L1815.4,560.7 L1820.5,560.9 L1825.7,561.1 L1830.8,561.3 L1836.0,561.6 L1841.1,561.8 L1846.3,562.0 L1851.4,562.3 L1856.6,562.5 L1861.7,562.8 L1866.9,563.0 L1872.0,563.3 L1877.2,563.6 L1882.3,563.9 L1887.5,564.2 L1892.6,564.5 L1897.7,564.8 L1902.9,565.1 L1908.0,565.4 L1913.2,565.8 L1918.3,566.1 L1923.4,566.5 L1928.6,566.8 L1933.7,567.2 L1938.8,567.6 L1944.0,568.0 L1949.1,568.4 L1954.2,568.9 L1959.3,569.3 L1964.5,569.7 L1969.6,570.2 L1974.7,570.7 L1979.8,571.2 L1984.9,571.7 L1990.0,572.2 L1995.1,572.8 L2000.2,573.3 L2005.4,573.9 L2010.5,574.5 L2015.6,575.1 L2020.7,575.7 L2025.7,576.3 L2030.8,577.0 L2035.9,577.7 L2041.0,578.4 L2046.1,579.1 L2051.2,579.8 L2056.3,580.6 L2061.3,581.3 L2066.4,582.1 L2071.5,582.9 L2076.6,583.7 L2081.6,584.5 L2086.7,585.4 L2091.8,586.2 L2096.8,587.1 L2101.9,588.0 L2106.9,588.9 L2112.0,589.8 L2117.1,590.7 L2122.1,591.6 L2127.2,592.5 L2132.2,593.5 L2137.3,594.4 L2142.3,595.4 L2147.4,596.3 L2152.5,597.3 L2157.5,598.3 L2162.6,599.2 L2167.6,600.2 L2172.7,601.2 L2177.7,602.2 L2182.8,603.1 L2187.9,604.1 L2192.9,605.1 L2198.0,606.1 L2203.1,607.0 L2208.1,608.0 L2213.2,609.0 L2218.3,609.9 L2223.3,610.9 L2228.4,611.8 L2233.5,612.8 L2238.6,613.7 L2243.7,614.7 L2248.8,615.6 L2253.9,616.5 L2258.9,617.4 L2264.0,618.3 L2269.1,619.2 L2274.2,620.1 L2279.3,620.9 L2284.5,621.8 L2289.6,622.7 L2294.7,623.6 L2299.8,624.4 L2304.9,625.3 L2310.0,626.2 L2315.1,627.1 L2320.2,627.9 L2325.3,628.8 L2330.4,629.7 L2335.5,630.6 L2340.6,631.5 L2345.7,632.4 L2350.8,633.4 L2355.8,634.3 L2360.9,635.3 L2366.0,636.2 L2371.1,637.2 L2376.1,638.2 L2381.2,639.2 L2386.2,640.3 L2391.3,641.3 L2396.3,642.4 L2401.4,643.5 L2406.4,644.6 L2411.4,645.8 L2416.4,647.0 L2421.4,648.2 L2426.4,649.4 L2431.4,650.6 L2436.3,651.9 L2441.3,653.3 L2446.2,654.6 L2451.2,656.0 L2456.1,657.4 L2461.0,658.9 L2465.9,660.4 L2470.8,661.9 L2475.7,663.5 L2480.5,665.1 L2485.4,666.8 L2490.2,668.5 L2495.0,670.2 L2499.8,672.0 L2504.6,673.8 L2509.4,675.7 L2514.2,677.6 L2518.9,679.6 L2523.7,681.5 L2528.4,683.5 L2533.1,685.6 L2537.9,687.6 L2542.6,689.6 L2547.3,691.7 L2552.1,693.8 L2556.8,695.8 L2561.5,697.9 L2566.3,699.9 L2571.0,701.9 L2575.8,703.9 L2580.6,705.9 L2585.3,707.9 L2590.1,709.9 L2594.9,711.9 L2599.6,713.9 L2604.3,716.0 L2609.1,718.0 L2613.8,720.2 L2618.4,722.3 L2623.1,724.5 L2627.7,726.8 L2632.2,729.2 L2636.7,731.6 L2641.2,734.1 L2645.6,736.7 L2650.0,739.4 L2654.3,742.2 L2658.5,745.1 L2662.8,748.0 L2667.0,751.0 L2671.1,754.0 L2675.3,757.1 L2679.4,760.2 L2683.5,763.3 L2687.6,766.4 L2691.7,769.6 L2695.7,772.8 L2699.8,775.9 L2703.9,779.0 L2708.0,782.2 L2712.1,785.3 L2716.2,788.5 L2720.2,791.6 L2724.2,794.9 L2728.1,798.2 L2731.9,801.6 L2735.7,805.2 L2739.3,808.8 L2742.8,812.6 L2746.2,816.5 L2749.5,820.5 L2752.7,824.7 L2755.7,828.9 L2758.6,833.2 L2761.4,837.6 L2763.9,842.1 L2766.4,846.6 L2768.7,851.2 L2770.8,855.8 L2772.8,860.5 L2774.7,865.3 L2776.4,870.1 L2778.1,875.0 L2779.6,879.9 L2781.0,884.8 L2782.2,889.8 L2783.4,894.8 L2784.5,899.8 L2785.4,904.9 L2786.3,909.9 L2787.1,915.0 L2787.8,920.2 L2788.4,925.3 L2789.0,930.5 L2789.5,935.6 L2789.9,940.8 L2790.3,946.0 L2790.6,951.1 L2790.8,956.3 L2791.0,961.4 L2791.2,966.6 L2791.3,971.7 L2791.4,976.8 L2791.5,981.9 L2791.7,987.0" fill="none" stroke="url(#shT)" stroke-width="34" opacity="0.55" filter="url(#b10)"/>
<path d="M301.9,730.8 L306.7,728.9 L311.5,727.0 L316.3,725.2 L321.1,723.3 L325.9,721.5 L330.7,719.7 L335.5,717.9 L340.3,716.1 L345.2,714.4 L350.0,712.6 L354.9,710.9 L359.7,709.2 L364.6,707.5 L369.5,705.9 L374.4,704.2 L379.3,702.6 L384.2,701.0 L389.1,699.4 L394.0,697.8 L398.9,696.2 L403.8,694.6 L408.8,693.1 L413.7,691.6 L418.6,690.1 L423.6,688.6 L428.5,687.1 L433.5,685.6 L438.4,684.1 L443.4,682.7 L448.3,681.2 L453.3,679.8 L458.3,678.3 L463.2,676.9 L468.2,675.5 L473.2,674.1 L478.1,672.7 L483.1,671.3 L488.1,670.0 L493.1,668.6 L498.1,667.2 L503.0,665.9 L508.0,664.5 L513.0,663.2 L518.0,661.8 L522.9,660.5 L527.9,659.2 L532.9,657.9 L537.9,656.5 L542.8,655.2 L547.8,653.9 L552.8,652.6 L557.8,651.3 L562.8,650.0 L567.7,648.7 L572.7,647.4 L577.7,646.2 L582.7,644.9 L587.6,643.6 L592.6,642.4 L597.6,641.1 L602.6,639.9 L607.6,638.7 L612.5,637.4 L617.5,636.2 L622.5,635.0 L627.5,633.8 L632.5,632.6 L637.5,631.4 L642.5,630.2 L647.5,629.1 L652.5,627.9 L657.5,626.8 L662.5,625.6 L667.5,624.5 L672.5,623.4 L677.5,622.3 L682.5,621.2 L687.6,620.1 L692.6,619.0 L697.6,617.9 L702.6,616.9 L707.7,615.8 L712.7,614.8 L717.7,613.7 L722.8,612.7 L727.8,611.7 L732.9,610.7 L737.9,609.7 L743.0,608.7 L748.0,607.8 L753.1,606.8 L758.2,605.9 L763.2,604.9 L768.3,604.0 L773.4,603.1 L778.4,602.2 L783.5,601.3 L788.6,600.4 L793.6,599.5 L798.7,598.7 L803.8,597.8 L808.9,597.0 L814.0,596.1 L819.1,595.3 L824.2,594.5 L829.2,593.7 L834.3,592.9 L839.4,592.1 L844.5,591.3 L849.6,590.6 L854.7,589.8 L859.8,589.1 L864.9,588.3 L870.0,587.6 L875.1,586.9 L880.3,586.2 L885.4,585.5 L890.5,584.8 L895.6,584.1 L900.7,583.5 L905.8,582.8 L910.9,582.2 L916.0,581.5 L921.1,580.9 L926.3,580.3 L931.4,579.7 L936.5,579.1 L941.6,578.5 L946.7,577.9 L951.8,577.3 L957.0,576.8 L962.1,576.2 L967.2,575.7 L972.3,575.2 L977.4,574.6 L982.6,574.1 L987.7,573.6 L992.8,573.1 L997.9,572.6 L1003.0,572.1 L1008.2,571.6 L1013.3,571.2 L1018.4,570.7 L1023.5,570.3 L1028.7,569.8 L1033.8,569.4 L1038.9,568.9 L1044.0,568.5 L1049.2,568.1 L1054.3,567.7 L1059.4,567.3 L1064.5,566.9 L1069.7,566.5 L1074.8,566.1 L1079.9,565.7 L1085.1,565.3 L1090.2,565.0 L1095.3,564.6 L1100.5,564.3 L1105.6,563.9 L1110.7,563.6 L1115.9,563.2 L1121.0,562.9 L1126.1,562.5 L1131.3,562.2 L1136.4,561.9 L1141.5,561.6 L1146.7,561.2 L1151.8,560.9 L1156.9,560.6 L1162.1,560.3 L1167.2,560.0 L1172.3,559.7 L1177.5,559.4 L1182.6,559.1 L1187.7,558.8 L1192.9,558.5 L1198.0,558.3 L1203.2,558.0 L1208.3,557.7 L1213.4,557.4 L1218.6,557.1 L1223.7,556.9 L1228.9,556.6 L1234.0,556.3 L1239.1,556.1 L1244.3,555.8 L1249.4,555.6 L1254.6,555.3 L1259.7,555.0 L1264.8,554.8 L1270.0,554.6 L1275.1,554.3 L1280.3,554.1 L1285.4,553.8 L1290.6,553.6 L1295.7,553.4 L1300.8,553.2 L1306.0,552.9 L1311.1,552.7 L1316.3,552.5 L1321.4,552.3 L1326.6,552.1 L1331.7,551.9 L1336.9,551.7 L1342.0,551.5 L1347.1,551.3 L1352.3,551.2 L1357.4,551.0 L1362.6,550.8 L1367.7,550.6 L1372.9,550.5 L1378.0,550.3 L1383.2,550.2 L1388.3,550.0 L1393.5,549.9 L1398.6,549.8 L1403.8,549.6 L1408.9,549.5 L1414.1,549.4 L1419.2,549.3 L1424.4,549.2 L1429.5,549.1 L1434.7,549.0 L1439.8,549.0 L1445.0,548.9 L1450.1,548.9 L1455.3,548.8 L1460.4,548.8 L1465.6,548.8 L1470.7,548.7 L1475.9,548.7 L1481.0,548.7 L1486.2,548.8 L1491.3,548.8 L1496.4,548.8 L1501.6,548.9 L1506.7,548.9 L1511.9,549.0 L1517.0,549.1 L1522.2,549.2 L1527.3,549.3 L1532.4,549.4 L1537.6,549.6 L1542.7,549.7 L1547.9,549.8 L1553.0,550.0 L1558.1,550.2 L1563.3,550.3 L1568.4,550.5 L1573.5,550.7 L1578.7,550.9 L1583.8,551.1 L1589.0,551.3 L1594.1,551.5 L1599.2,551.7 L1604.4,551.9 L1609.5,552.1 L1614.6,552.4 L1619.8,552.6 L1624.9,552.8 L1630.0,553.0 L1635.2,553.3 L1640.3,553.5 L1645.5,553.7 L1650.6,554.0 L1655.7,554.2 L1660.9,554.4 L1666.0,554.7 L1671.2,554.9 L1676.3,555.1 L1681.5,555.4 L1686.6,555.6 L1691.7,555.8 L1696.9,556.0 L1702.0,556.3 L1707.2,556.5 L1712.3,556.7 L1717.5,556.9 L1722.6,557.1 L1727.8,557.3 L1732.9,557.5 L1738.1,557.7 L1743.2,557.9 L1748.4,558.1 L1753.5,558.3 L1758.7,558.5 L1763.8,558.7 L1769.0,558.9 L1774.1,559.1 L1779.3,559.3 L1784.5,559.5 L1789.6,559.7 L1794.8,559.9 L1799.9,560.1 L1805.1,560.3 L1810.2,560.5 L1815.4,560.7 L1820.5,560.9 L1825.7,561.1 L1830.8,561.3 L1836.0,561.6 L1841.1,561.8 L1846.3,562.0 L1851.4,562.3 L1856.6,562.5 L1861.7,562.8 L1866.9,563.0 L1872.0,563.3 L1877.2,563.6 L1882.3,563.9 L1887.5,564.2 L1892.6,564.5 L1897.7,564.8 L1902.9,565.1 L1908.0,565.4 L1913.2,565.8 L1918.3,566.1 L1923.4,566.5 L1928.6,566.8 L1933.7,567.2 L1938.8,567.6 L1944.0,568.0 L1949.1,568.4 L1954.2,568.9 L1959.3,569.3 L1964.5,569.7 L1969.6,570.2 L1974.7,570.7 L1979.8,571.2 L1984.9,571.7 L1990.0,572.2 L1995.1,572.8 L2000.2,573.3 L2005.4,573.9 L2010.5,574.5 L2015.6,575.1 L2020.7,575.7 L2025.7,576.3 L2030.8,577.0 L2035.9,577.7 L2041.0,578.4 L2046.1,579.1 L2051.2,579.8 L2056.3,580.6 L2061.3,581.3 L2066.4,582.1 L2071.5,582.9 L2076.6,583.7 L2081.6,584.5 L2086.7,585.4 L2091.8,586.2 L2096.8,587.1 L2101.9,588.0 L2106.9,588.9 L2112.0,589.8 L2117.1,590.7 L2122.1,591.6 L2127.2,592.5 L2132.2,593.5 L2137.3,594.4 L2142.3,595.4 L2147.4,596.3 L2152.5,597.3 L2157.5,598.3 L2162.6,599.2 L2167.6,600.2 L2172.7,601.2 L2177.7,602.2 L2182.8,603.1 L2187.9,604.1 L2192.9,605.1 L2198.0,606.1 L2203.1,607.0 L2208.1,608.0 L2213.2,609.0 L2218.3,609.9 L2223.3,610.9 L2228.4,611.8 L2233.5,612.8 L2238.6,613.7 L2243.7,614.7 L2248.8,615.6 L2253.9,616.5 L2258.9,617.4 L2264.0,618.3 L2269.1,619.2 L2274.2,620.1 L2279.3,620.9 L2284.5,621.8 L2289.6,622.7 L2294.7,623.6 L2299.8,624.4 L2304.9,625.3 L2310.0,626.2 L2315.1,627.1 L2320.2,627.9 L2325.3,628.8 L2330.4,629.7 L2335.5,630.6 L2340.6,631.5 L2345.7,632.4 L2350.8,633.4 L2355.8,634.3 L2360.9,635.3 L2366.0,636.2 L2371.1,637.2 L2376.1,638.2 L2381.2,639.2 L2386.2,640.3 L2391.3,641.3 L2396.3,642.4 L2401.4,643.5 L2406.4,644.6 L2411.4,645.8 L2416.4,647.0 L2421.4,648.2 L2426.4,649.4 L2431.4,650.6 L2436.3,651.9 L2441.3,653.3 L2446.2,654.6 L2451.2,656.0 L2456.1,657.4 L2461.0,658.9 L2465.9,660.4 L2470.8,661.9 L2475.7,663.5 L2480.5,665.1 L2485.4,666.8 L2490.2,668.5 L2495.0,670.2 L2499.8,672.0 L2504.6,673.8 L2509.4,675.7 L2514.2,677.6 L2518.9,679.6 L2523.7,681.5 L2528.4,683.5 L2533.1,685.6 L2537.9,687.6 L2542.6,689.6 L2547.3,691.7 L2552.1,693.8 L2556.8,695.8 L2561.5,697.9 L2566.3,699.9 L2571.0,701.9 L2575.8,703.9 L2580.6,705.9 L2585.3,707.9 L2590.1,709.9 L2594.9,711.9 L2599.6,713.9 L2604.3,716.0 L2609.1,718.0 L2613.8,720.2 L2618.4,722.3 L2623.1,724.5 L2627.7,726.8 L2632.2,729.2 L2636.7,731.6 L2641.2,734.1 L2645.6,736.7 L2650.0,739.4 L2654.3,742.2 L2658.5,745.1 L2662.8,748.0 L2667.0,751.0 L2671.1,754.0 L2675.3,757.1 L2679.4,760.2 L2683.5,763.3 L2687.6,766.4 L2691.7,769.6 L2695.7,772.8 L2699.8,775.9 L2703.9,779.0 L2708.0,782.2 L2712.1,785.3 L2716.2,788.5 L2720.2,791.6 L2724.2,794.9 L2728.1,798.2 L2731.9,801.6 L2735.7,805.2 L2739.3,808.8 L2742.8,812.6 L2746.2,816.5 L2749.5,820.5 L2752.7,824.7 L2755.7,828.9 L2758.6,833.2 L2761.4,837.6 L2763.9,842.1 L2766.4,846.6 L2768.7,851.2 L2770.8,855.8 L2772.8,860.5 L2774.7,865.3 L2776.4,870.1 L2778.1,875.0 L2779.6,879.9 L2781.0,884.8 L2782.2,889.8 L2783.4,894.8 L2784.5,899.8 L2785.4,904.9 L2786.3,909.9 L2787.1,915.0 L2787.8,920.2 L2788.4,925.3 L2789.0,930.5 L2789.5,935.6 L2789.9,940.8 L2790.3,946.0 L2790.6,951.1 L2790.8,956.3 L2791.0,961.4 L2791.2,966.6 L2791.3,971.7 L2791.4,976.8 L2791.5,981.9 L2791.7,987.0" fill="none" stroke="url(#shT)" stroke-width="8" opacity="0.5" filter="url(#b2)"/>
<path d="M302.8,1243.4 L307.6,1245.3 L312.4,1247.2 L317.2,1249.0 L322.0,1250.8 L326.9,1252.6 L331.7,1254.4 L336.5,1256.2 L341.4,1257.9 L346.3,1259.7 L351.1,1261.4 L356.0,1263.1 L360.9,1264.8 L365.7,1266.5 L370.6,1268.1 L375.5,1269.8 L380.4,1271.4 L385.3,1273.0 L390.2,1274.6 L395.1,1276.2 L400.0,1277.7 L404.9,1279.3 L409.8,1280.9 L414.7,1282.4 L419.7,1283.9 L424.6,1285.4 L429.5,1286.9 L434.4,1288.4 L439.4,1289.9 L444.3,1291.4 L449.3,1292.8 L454.2,1294.3 L459.1,1295.7 L464.1,1297.2 L469.0,1298.6 L474.0,1300.0 L478.9,1301.4 L483.9,1302.8 L488.9,1304.2 L493.8,1305.6 L498.8,1307.0 L503.8,1308.3 L508.7,1309.7 L513.7,1311.0 L518.7,1312.4 L523.6,1313.7 L528.6,1315.0 L533.6,1316.4 L538.6,1317.7 L543.6,1319.0 L548.6,1320.2 L553.5,1321.5 L558.5,1322.8 L563.5,1324.1 L568.5,1325.3 L573.5,1326.6 L578.5,1327.8 L583.5,1329.0 L588.5,1330.2 L593.5,1331.5 L598.5,1332.7 L603.6,1333.8 L608.6,1335.0 L613.6,1336.2 L618.6,1337.4 L623.6,1338.5 L628.6,1339.7 L633.7,1340.8 L638.7,1342.0 L643.7,1343.1 L648.7,1344.2 L653.8,1345.3 L658.8,1346.4 L663.8,1347.5 L668.9,1348.6 L673.9,1349.6 L678.9,1350.7 L684.0,1351.8 L689.0,1352.8 L694.1,1353.9 L699.1,1354.9 L704.2,1355.9 L709.2,1356.9 L714.3,1357.9 L719.3,1358.9 L724.4,1359.9 L729.4,1360.9 L734.5,1361.9 L739.6,1362.8 L744.6,1363.8 L749.7,1364.7 L754.8,1365.6 L759.8,1366.6 L764.9,1367.5 L770.0,1368.4 L775.0,1369.3 L780.1,1370.2 L785.2,1371.1 L790.3,1372.0 L795.3,1372.8 L800.4,1373.7 L805.5,1374.5 L810.6,1375.4 L815.7,1376.2 L820.8,1377.0 L825.9,1377.8 L830.9,1378.6 L836.0,1379.4 L841.1,1380.2 L846.2,1381.0 L851.3,1381.8 L856.4,1382.6 L861.5,1383.3 L866.6,1384.1 L871.7,1384.8 L876.8,1385.5 L881.9,1386.2 L887.0,1387.0 L892.1,1387.7 L897.2,1388.4 L902.3,1389.1 L907.4,1389.7 L912.6,1390.4 L917.7,1391.1 L922.8,1391.7 L927.9,1392.4 L933.0,1393.0 L938.1,1393.6 L943.2,1394.3 L948.4,1394.9 L953.5,1395.5 L958.6,1396.1 L963.7,1396.7 L968.9,1397.3 L974.0,1397.8 L979.1,1398.4 L984.2,1399.0 L989.4,1399.5 L994.5,1400.1 L999.6,1400.6 L1004.7,1401.1 L1009.9,1401.7 L1015.0,1402.2 L1020.1,1402.7 L1025.3,1403.2 L1030.4,1403.7 L1035.5,1404.2 L1040.7,1404.6 L1045.8,1405.1 L1050.9,1405.6 L1056.1,1406.0 L1061.2,1406.5 L1066.3,1406.9 L1071.5,1407.3 L1076.6,1407.8 L1081.8,1408.2 L1086.9,1408.6 L1092.0,1409.0 L1097.2,1409.4 L1102.3,1409.8 L1107.5,1410.2 L1112.6,1410.5 L1117.8,1410.9 L1122.9,1411.3 L1128.0,1411.6 L1133.2,1412.0 L1138.3,1412.3 L1143.5,1412.7 L1148.6,1413.0 L1153.8,1413.3 L1158.9,1413.6 L1164.1,1413.9 L1169.2,1414.2 L1174.4,1414.5 L1179.5,1414.8 L1184.7,1415.1 L1189.8,1415.4 L1195.0,1415.7 L1200.1,1415.9 L1205.3,1416.2 L1210.4,1416.4 L1215.6,1416.7 L1220.7,1416.9 L1225.9,1417.1 L1231.0,1417.4 L1236.2,1417.6 L1241.3,1417.8 L1246.4,1418.0 L1251.6,1418.2 L1256.7,1418.4 L1261.9,1418.6 L1267.0,1418.8 L1272.2,1418.9 L1277.3,1419.1 L1282.5,1419.3 L1287.6,1419.4 L1292.8,1419.6 L1297.9,1419.7 L1303.1,1419.9 L1308.2,1420.0 L1313.4,1420.1 L1318.5,1420.3 L1323.7,1420.4 L1328.8,1420.5 L1334.0,1420.6 L1339.1,1420.7 L1344.3,1420.8 L1349.4,1420.9 L1354.6,1421.0 L1359.7,1421.1 L1364.9,1421.1 L1370.0,1421.2 L1375.2,1421.3 L1380.3,1421.3 L1385.5,1421.4 L1390.6,1421.4 L1395.7,1421.5 L1400.9,1421.5 L1406.0,1421.6 L1411.2,1421.6 L1416.3,1421.6 L1421.5,1421.7 L1426.6,1421.7 L1431.8,1421.7 L1436.9,1421.7 L1442.1,1421.7 L1447.2,1421.8 L1452.4,1421.8 L1457.5,1421.8 L1462.7,1421.8 L1467.8,1421.8 L1473.0,1421.7 L1478.1,1421.7 L1483.3,1421.7 L1488.4,1421.7 L1493.6,1421.7 L1498.7,1421.6 L1503.9,1421.6 L1509.0,1421.6 L1514.2,1421.6 L1519.3,1421.5 L1524.5,1421.5 L1529.6,1421.4 L1534.8,1421.4 L1539.9,1421.3 L1545.1,1421.3 L1550.2,1421.2 L1555.4,1421.2 L1560.5,1421.1 L1565.7,1421.1 L1570.8,1421.0 L1576.0,1421.0 L1581.1,1420.9 L1586.3,1420.8 L1591.4,1420.8 L1596.6,1420.7 L1601.7,1420.6 L1606.9,1420.6 L1612.1,1420.5 L1617.2,1420.4 L1622.4,1420.3 L1627.5,1420.2 L1632.7,1420.2 L1637.8,1420.1 L1643.0,1420.0 L1648.2,1419.9 L1653.3,1419.8 L1658.5,1419.7 L1663.6,1419.6 L1668.8,1419.5 L1674.0,1419.4 L1679.1,1419.3 L1684.3,1419.2 L1689.4,1419.1 L1694.6,1419.0 L1699.7,1418.9 L1704.9,1418.7 L1710.1,1418.6 L1715.2,1418.5 L1720.4,1418.3 L1725.5,1418.2 L1730.7,1418.0 L1735.9,1417.9 L1741.0,1417.7 L1746.2,1417.6 L1751.3,1417.4 L1756.5,1417.2 L1761.6,1417.0 L1766.8,1416.9 L1771.9,1416.7 L1777.1,1416.5 L1782.3,1416.3 L1787.4,1416.1 L1792.6,1415.8 L1797.7,1415.6 L1802.9,1415.4 L1808.0,1415.1 L1813.2,1414.9 L1818.3,1414.7 L1823.5,1414.4 L1828.6,1414.1 L1833.8,1413.9 L1838.9,1413.6 L1844.1,1413.3 L1849.2,1413.0 L1854.4,1412.7 L1859.5,1412.4 L1864.7,1412.1 L1869.8,1411.7 L1874.9,1411.4 L1880.1,1411.1 L1885.2,1410.7 L1890.4,1410.4 L1895.5,1410.0 L1900.6,1409.6 L1905.8,1409.2 L1910.9,1408.8 L1916.0,1408.4 L1921.2,1408.0 L1926.3,1407.6 L1931.4,1407.1 L1936.6,1406.7 L1941.7,1406.2 L1946.8,1405.7 L1952.0,1405.3 L1957.1,1404.8 L1962.2,1404.3 L1967.3,1403.8 L1972.5,1403.2 L1977.6,1402.7 L1982.7,1402.2 L1987.8,1401.6 L1992.9,1401.0 L1998.0,1400.5 L2003.2,1399.9 L2008.3,1399.3 L2013.4,1398.6 L2018.5,1398.0 L2023.6,1397.4 L2028.7,1396.7 L2033.8,1396.1 L2038.9,1395.4 L2044.0,1394.7 L2049.1,1394.0 L2054.2,1393.3 L2059.3,1392.5 L2064.4,1391.8 L2069.5,1391.0 L2074.6,1390.3 L2079.7,1389.5 L2084.7,1388.7 L2089.8,1387.9 L2094.9,1387.1 L2100.0,1386.3 L2105.1,1385.4 L2110.2,1384.6 L2115.2,1383.8 L2120.3,1382.9 L2125.4,1382.0 L2130.5,1381.2 L2135.6,1380.3 L2140.6,1379.4 L2145.7,1378.5 L2150.8,1377.6 L2155.9,1376.7 L2160.9,1375.8 L2166.0,1374.8 L2171.1,1373.9 L2176.1,1373.0 L2181.2,1372.0 L2186.3,1371.1 L2191.4,1370.1 L2196.4,1369.2 L2201.5,1368.2 L2206.6,1367.3 L2211.6,1366.3 L2216.7,1365.3 L2221.8,1364.4 L2226.8,1363.4 L2231.9,1362.4 L2237.0,1361.4 L2242.0,1360.4 L2247.1,1359.5 L2252.2,1358.5 L2257.2,1357.5 L2262.3,1356.5 L2267.4,1355.5 L2272.4,1354.6 L2277.5,1353.6 L2282.6,1352.6 L2287.6,1351.6 L2292.7,1350.6 L2297.8,1349.6 L2302.8,1348.6 L2307.9,1347.6 L2313.0,1346.6 L2318.0,1345.6 L2323.1,1344.5 L2328.2,1343.5 L2333.2,1342.5 L2338.3,1341.4 L2343.3,1340.4 L2348.4,1339.3 L2353.4,1338.3 L2358.5,1337.2 L2363.5,1336.1 L2368.6,1335.0 L2373.6,1333.9 L2378.6,1332.8 L2383.7,1331.7 L2388.7,1330.5 L2393.7,1329.4 L2398.7,1328.2 L2403.8,1327.1 L2408.8,1325.9 L2413.8,1324.7 L2418.8,1323.5 L2423.8,1322.3 L2428.8,1321.0 L2433.8,1319.8 L2438.8,1318.5 L2443.8,1317.3 L2448.8,1316.0 L2453.7,1314.7 L2458.7,1313.3 L2463.7,1312.0 L2468.6,1310.6 L2473.6,1309.2 L2478.6,1307.9 L2483.5,1306.4 L2488.4,1305.0 L2493.4,1303.6 L2498.3,1302.1 L2503.2,1300.6 L2508.1,1299.1 L2513.1,1297.5 L2518.0,1296.0 L2522.9,1294.4 L2527.8,1292.8 L2532.6,1291.2 L2537.5,1289.6 L2542.4,1287.9 L2547.3,1286.2 L2552.1,1284.5 L2557.0,1282.8 L2561.8,1281.1 L2566.7,1279.3 L2571.5,1277.5 L2576.3,1275.7 L2581.1,1273.9 L2586.0,1272.1 L2590.8,1270.2 L2595.6,1268.3 L2600.3,1266.4 L2605.1,1264.4 L2609.9,1262.5 L2614.7,1260.5 L2619.4,1258.5 L2624.2,1256.5 L2629.0,1254.4 L2633.7,1252.4 L2638.4,1250.3 L2643.2,1248.2 L2647.9,1246.0 L2652.6,1243.9 L2657.3,1241.6 L2661.9,1239.4 L2666.5,1237.0 L2671.1,1234.6 L2675.5,1232.1 L2680.0,1229.5 L2684.3,1226.8 L2688.6,1224.0 L2692.8,1221.0 L2696.8,1217.9 L2700.8,1214.7 L2704.7,1211.4 L2708.5,1207.9 L2712.2,1204.3 L2715.8,1200.7 L2719.3,1196.9 L2722.8,1193.0 L2726.1,1189.1 L2729.4,1185.1 L2732.6,1180.9 L2735.7,1176.8 L2738.7,1172.5 L2741.6,1168.2 L2744.4,1163.8 L2747.2,1159.4 L2749.9,1154.9 L2752.5,1150.4 L2755.0,1145.9 L2757.5,1141.3 L2759.9,1136.7 L2762.2,1132.1 L2764.4,1127.4 L2766.5,1122.8 L2768.6,1118.1 L2770.5,1113.3 L2772.4,1108.6 L2774.1,1103.8 L2775.8,1099.0 L2777.4,1094.1 L2778.8,1089.2 L2780.2,1084.3 L2781.5,1079.3 L2782.6,1074.3 L2783.6,1069.3 L2784.5,1064.2 L2785.3,1059.1 L2786.0,1054.0 L2786.6,1048.8 L2787.1,1043.6 L2787.6,1038.5 L2788.1,1033.3 L2788.5,1028.1 L2788.8,1022.9 L2789.2,1017.7 L2789.6,1012.5 L2789.9,1007.4 L2790.3,1002.2 L2790.7,997.1 L2791.2,992.1 L2791.7,987.0" fill="none" stroke="url(#shB)" stroke-width="30" opacity="0.6" filter="url(#b8)"/>
<path d="M302.8,1243.4 L307.6,1245.3 L312.4,1247.2 L317.2,1249.0 L322.0,1250.8 L326.9,1252.6 L331.7,1254.4 L336.5,1256.2 L341.4,1257.9 L346.3,1259.7 L351.1,1261.4 L356.0,1263.1 L360.9,1264.8 L365.7,1266.5 L370.6,1268.1 L375.5,1269.8 L380.4,1271.4 L385.3,1273.0 L390.2,1274.6 L395.1,1276.2 L400.0,1277.7 L404.9,1279.3 L409.8,1280.9 L414.7,1282.4 L419.7,1283.9 L424.6,1285.4 L429.5,1286.9 L434.4,1288.4 L439.4,1289.9 L444.3,1291.4 L449.3,1292.8 L454.2,1294.3 L459.1,1295.7 L464.1,1297.2 L469.0,1298.6 L474.0,1300.0 L478.9,1301.4 L483.9,1302.8 L488.9,1304.2 L493.8,1305.6 L498.8,1307.0 L503.8,1308.3 L508.7,1309.7 L513.7,1311.0 L518.7,1312.4 L523.6,1313.7 L528.6,1315.0 L533.6,1316.4 L538.6,1317.7 L543.6,1319.0 L548.6,1320.2 L553.5,1321.5 L558.5,1322.8 L563.5,1324.1 L568.5,1325.3 L573.5,1326.6 L578.5,1327.8 L583.5,1329.0 L588.5,1330.2 L593.5,1331.5 L598.5,1332.7 L603.6,1333.8 L608.6,1335.0 L613.6,1336.2 L618.6,1337.4 L623.6,1338.5 L628.6,1339.7 L633.7,1340.8 L638.7,1342.0 L643.7,1343.1 L648.7,1344.2 L653.8,1345.3 L658.8,1346.4 L663.8,1347.5 L668.9,1348.6 L673.9,1349.6 L678.9,1350.7 L684.0,1351.8 L689.0,1352.8 L694.1,1353.9 L699.1,1354.9 L704.2,1355.9 L709.2,1356.9 L714.3,1357.9 L719.3,1358.9 L724.4,1359.9 L729.4,1360.9 L734.5,1361.9 L739.6,1362.8 L744.6,1363.8 L749.7,1364.7 L754.8,1365.6 L759.8,1366.6 L764.9,1367.5 L770.0,1368.4 L775.0,1369.3 L780.1,1370.2 L785.2,1371.1 L790.3,1372.0 L795.3,1372.8 L800.4,1373.7 L805.5,1374.5 L810.6,1375.4 L815.7,1376.2 L820.8,1377.0 L825.9,1377.8 L830.9,1378.6 L836.0,1379.4 L841.1,1380.2 L846.2,1381.0 L851.3,1381.8 L856.4,1382.6 L861.5,1383.3 L866.6,1384.1 L871.7,1384.8 L876.8,1385.5 L881.9,1386.2 L887.0,1387.0 L892.1,1387.7 L897.2,1388.4 L902.3,1389.1 L907.4,1389.7 L912.6,1390.4 L917.7,1391.1 L922.8,1391.7 L927.9,1392.4 L933.0,1393.0 L938.1,1393.6 L943.2,1394.3 L948.4,1394.9 L953.5,1395.5 L958.6,1396.1 L963.7,1396.7 L968.9,1397.3 L974.0,1397.8 L979.1,1398.4 L984.2,1399.0 L989.4,1399.5 L994.5,1400.1 L999.6,1400.6 L1004.7,1401.1 L1009.9,1401.7 L1015.0,1402.2 L1020.1,1402.7 L1025.3,1403.2 L1030.4,1403.7 L1035.5,1404.2 L1040.7,1404.6 L1045.8,1405.1 L1050.9,1405.6 L1056.1,1406.0 L1061.2,1406.5 L1066.3,1406.9 L1071.5,1407.3 L1076.6,1407.8 L1081.8,1408.2 L1086.9,1408.6 L1092.0,1409.0 L1097.2,1409.4 L1102.3,1409.8 L1107.5,1410.2 L1112.6,1410.5 L1117.8,1410.9 L1122.9,1411.3 L1128.0,1411.6 L1133.2,1412.0 L1138.3,1412.3 L1143.5,1412.7 L1148.6,1413.0 L1153.8,1413.3 L1158.9,1413.6 L1164.1,1413.9 L1169.2,1414.2 L1174.4,1414.5 L1179.5,1414.8 L1184.7,1415.1 L1189.8,1415.4 L1195.0,1415.7 L1200.1,1415.9 L1205.3,1416.2 L1210.4,1416.4 L1215.6,1416.7 L1220.7,1416.9 L1225.9,1417.1 L1231.0,1417.4 L1236.2,1417.6 L1241.3,1417.8 L1246.4,1418.0 L1251.6,1418.2 L1256.7,1418.4 L1261.9,1418.6 L1267.0,1418.8 L1272.2,1418.9 L1277.3,1419.1 L1282.5,1419.3 L1287.6,1419.4 L1292.8,1419.6 L1297.9,1419.7 L1303.1,1419.9 L1308.2,1420.0 L1313.4,1420.1 L1318.5,1420.3 L1323.7,1420.4 L1328.8,1420.5 L1334.0,1420.6 L1339.1,1420.7 L1344.3,1420.8 L1349.4,1420.9 L1354.6,1421.0 L1359.7,1421.1 L1364.9,1421.1 L1370.0,1421.2 L1375.2,1421.3 L1380.3,1421.3 L1385.5,1421.4 L1390.6,1421.4 L1395.7,1421.5 L1400.9,1421.5 L1406.0,1421.6 L1411.2,1421.6 L1416.3,1421.6 L1421.5,1421.7 L1426.6,1421.7 L1431.8,1421.7 L1436.9,1421.7 L1442.1,1421.7 L1447.2,1421.8 L1452.4,1421.8 L1457.5,1421.8 L1462.7,1421.8 L1467.8,1421.8 L1473.0,1421.7 L1478.1,1421.7 L1483.3,1421.7 L1488.4,1421.7 L1493.6,1421.7 L1498.7,1421.6 L1503.9,1421.6 L1509.0,1421.6 L1514.2,1421.6 L1519.3,1421.5 L1524.5,1421.5 L1529.6,1421.4 L1534.8,1421.4 L1539.9,1421.3 L1545.1,1421.3 L1550.2,1421.2 L1555.4,1421.2 L1560.5,1421.1 L1565.7,1421.1 L1570.8,1421.0 L1576.0,1421.0 L1581.1,1420.9 L1586.3,1420.8 L1591.4,1420.8 L1596.6,1420.7 L1601.7,1420.6 L1606.9,1420.6 L1612.1,1420.5 L1617.2,1420.4 L1622.4,1420.3 L1627.5,1420.2 L1632.7,1420.2 L1637.8,1420.1 L1643.0,1420.0 L1648.2,1419.9 L1653.3,1419.8 L1658.5,1419.7 L1663.6,1419.6 L1668.8,1419.5 L1674.0,1419.4 L1679.1,1419.3 L1684.3,1419.2 L1689.4,1419.1 L1694.6,1419.0 L1699.7,1418.9 L1704.9,1418.7 L1710.1,1418.6 L1715.2,1418.5 L1720.4,1418.3 L1725.5,1418.2 L1730.7,1418.0 L1735.9,1417.9 L1741.0,1417.7 L1746.2,1417.6 L1751.3,1417.4 L1756.5,1417.2 L1761.6,1417.0 L1766.8,1416.9 L1771.9,1416.7 L1777.1,1416.5 L1782.3,1416.3 L1787.4,1416.1 L1792.6,1415.8 L1797.7,1415.6 L1802.9,1415.4 L1808.0,1415.1 L1813.2,1414.9 L1818.3,1414.7 L1823.5,1414.4 L1828.6,1414.1 L1833.8,1413.9 L1838.9,1413.6 L1844.1,1413.3 L1849.2,1413.0 L1854.4,1412.7 L1859.5,1412.4 L1864.7,1412.1 L1869.8,1411.7 L1874.9,1411.4 L1880.1,1411.1 L1885.2,1410.7 L1890.4,1410.4 L1895.5,1410.0 L1900.6,1409.6 L1905.8,1409.2 L1910.9,1408.8 L1916.0,1408.4 L1921.2,1408.0 L1926.3,1407.6 L1931.4,1407.1 L1936.6,1406.7 L1941.7,1406.2 L1946.8,1405.7 L1952.0,1405.3 L1957.1,1404.8 L1962.2,1404.3 L1967.3,1403.8 L1972.5,1403.2 L1977.6,1402.7 L1982.7,1402.2 L1987.8,1401.6 L1992.9,1401.0 L1998.0,1400.5 L2003.2,1399.9 L2008.3,1399.3 L2013.4,1398.6 L2018.5,1398.0 L2023.6,1397.4 L2028.7,1396.7 L2033.8,1396.1 L2038.9,1395.4 L2044.0,1394.7 L2049.1,1394.0 L2054.2,1393.3 L2059.3,1392.5 L2064.4,1391.8 L2069.5,1391.0 L2074.6,1390.3 L2079.7,1389.5 L2084.7,1388.7 L2089.8,1387.9 L2094.9,1387.1 L2100.0,1386.3 L2105.1,1385.4 L2110.2,1384.6 L2115.2,1383.8 L2120.3,1382.9 L2125.4,1382.0 L2130.5,1381.2 L2135.6,1380.3 L2140.6,1379.4 L2145.7,1378.5 L2150.8,1377.6 L2155.9,1376.7 L2160.9,1375.8 L2166.0,1374.8 L2171.1,1373.9 L2176.1,1373.0 L2181.2,1372.0 L2186.3,1371.1 L2191.4,1370.1 L2196.4,1369.2 L2201.5,1368.2 L2206.6,1367.3 L2211.6,1366.3 L2216.7,1365.3 L2221.8,1364.4 L2226.8,1363.4 L2231.9,1362.4 L2237.0,1361.4 L2242.0,1360.4 L2247.1,1359.5 L2252.2,1358.5 L2257.2,1357.5 L2262.3,1356.5 L2267.4,1355.5 L2272.4,1354.6 L2277.5,1353.6 L2282.6,1352.6 L2287.6,1351.6 L2292.7,1350.6 L2297.8,1349.6 L2302.8,1348.6 L2307.9,1347.6 L2313.0,1346.6 L2318.0,1345.6 L2323.1,1344.5 L2328.2,1343.5 L2333.2,1342.5 L2338.3,1341.4 L2343.3,1340.4 L2348.4,1339.3 L2353.4,1338.3 L2358.5,1337.2 L2363.5,1336.1 L2368.6,1335.0 L2373.6,1333.9 L2378.6,1332.8 L2383.7,1331.7 L2388.7,1330.5 L2393.7,1329.4 L2398.7,1328.2 L2403.8,1327.1 L2408.8,1325.9 L2413.8,1324.7 L2418.8,1323.5 L2423.8,1322.3 L2428.8,1321.0 L2433.8,1319.8 L2438.8,1318.5 L2443.8,1317.3 L2448.8,1316.0 L2453.7,1314.7 L2458.7,1313.3 L2463.7,1312.0 L2468.6,1310.6 L2473.6,1309.2 L2478.6,1307.9 L2483.5,1306.4 L2488.4,1305.0 L2493.4,1303.6 L2498.3,1302.1 L2503.2,1300.6 L2508.1,1299.1 L2513.1,1297.5 L2518.0,1296.0 L2522.9,1294.4 L2527.8,1292.8 L2532.6,1291.2 L2537.5,1289.6 L2542.4,1287.9 L2547.3,1286.2 L2552.1,1284.5 L2557.0,1282.8 L2561.8,1281.1 L2566.7,1279.3 L2571.5,1277.5 L2576.3,1275.7 L2581.1,1273.9 L2586.0,1272.1 L2590.8,1270.2 L2595.6,1268.3 L2600.3,1266.4 L2605.1,1264.4 L2609.9,1262.5 L2614.7,1260.5 L2619.4,1258.5 L2624.2,1256.5 L2629.0,1254.4 L2633.7,1252.4 L2638.4,1250.3 L2643.2,1248.2 L2647.9,1246.0 L2652.6,1243.9 L2657.3,1241.6 L2661.9,1239.4 L2666.5,1237.0 L2671.1,1234.6 L2675.5,1232.1 L2680.0,1229.5 L2684.3,1226.8 L2688.6,1224.0 L2692.8,1221.0 L2696.8,1217.9 L2700.8,1214.7 L2704.7,1211.4 L2708.5,1207.9 L2712.2,1204.3 L2715.8,1200.7 L2719.3,1196.9 L2722.8,1193.0 L2726.1,1189.1 L2729.4,1185.1 L2732.6,1180.9 L2735.7,1176.8 L2738.7,1172.5 L2741.6,1168.2 L2744.4,1163.8 L2747.2,1159.4 L2749.9,1154.9 L2752.5,1150.4 L2755.0,1145.9 L2757.5,1141.3 L2759.9,1136.7 L2762.2,1132.1 L2764.4,1127.4 L2766.5,1122.8 L2768.6,1118.1 L2770.5,1113.3 L2772.4,1108.6 L2774.1,1103.8 L2775.8,1099.0 L2777.4,1094.1 L2778.8,1089.2 L2780.2,1084.3 L2781.5,1079.3 L2782.6,1074.3 L2783.6,1069.3 L2784.5,1064.2 L2785.3,1059.1 L2786.0,1054.0 L2786.6,1048.8 L2787.1,1043.6 L2787.6,1038.5 L2788.1,1033.3 L2788.5,1028.1 L2788.8,1022.9 L2789.2,1017.7 L2789.6,1012.5 L2789.9,1007.4 L2790.3,1002.2 L2790.7,997.1 L2791.2,992.1 L2791.7,987.0" fill="none" stroke="url(#shB2)" stroke-width="7" opacity="0.8" filter="url(#b2)"/>
<rect x="700" y="986.4" width="850" height="1.3" fill="#E08060" opacity="0.35"/>
<rect x="2560" y="986.4" width="190" height="1.3" fill="#E08060" opacity="0.3"/>
</g>
</svg>
<svg class="abs" style="left:0;top:0" width="2880" height="1800" viewBox="0 0 2880 1800" font-family='"Liberation Sans", sans-serif'>
<rect x="451" y="231.5" width="130" height="36" fill="#FFFFE8" stroke="#111" stroke-width="2"/>
<text x="457" y="258" font-size="21" fill="#333" >Bottom view</text>
</svg>
</body></html>
